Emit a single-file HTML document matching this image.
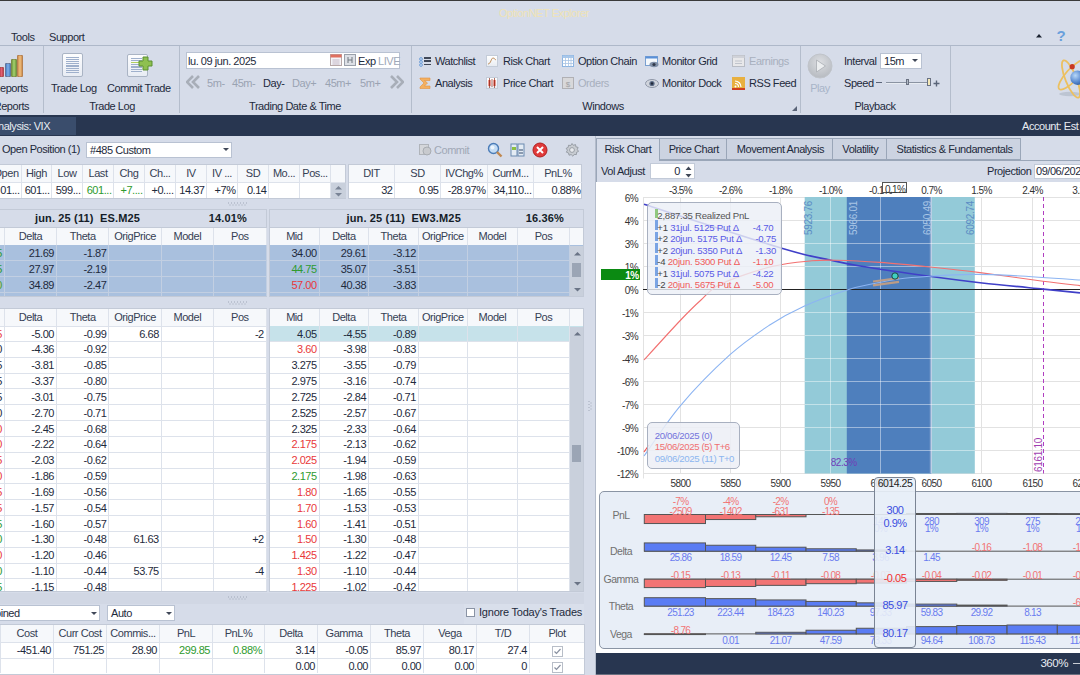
<!DOCTYPE html><html><head><meta charset="utf-8"><style>
*{margin:0;padding:0;box-sizing:border-box}
html,body{width:1080px;height:675px;overflow:hidden;background:#d6dce9}
body{position:relative;font-family:"Liberation Sans",sans-serif;}
body>div{position:absolute}
.t{white-space:nowrap;font-size:11px;letter-spacing:-0.45px;line-height:13px}
</style></head><body><div style="left:0px;top:0px;width:1080px;height:675px;background:#d6dce9"></div>
<div style="left:0px;top:0px;width:1080px;height:1px;background:#3a3a3a"></div>
<div style="left:0px;top:45px;width:1080px;height:1px;background:#aeb8c9"></div>
<div class="t" style="left:394.0px;top:6.70px;width:300px;text-align:center;font-size:11px;color:#efe3b5;letter-spacing:-0.45px">OptionNET Explorer</div>
<div class="t" style="left:11px;top:30.70px;font-size:11px;color:#1e2a3c">Tools</div>
<div class="t" style="left:49px;top:30.70px;font-size:11px;color:#1e2a3c">Support</div>
<svg style="position:absolute;left:1036px;top:34px;" width="6" height="4" viewBox="0 0 6 4"><path d="M0 3.5 L3 0 L6 3.5Z" fill="#1a2230"/></svg>
<svg style="position:absolute;left:1055px;top:27px;" width="12" height="16" viewBox="0 0 12 16"><text x="6" y="14" text-anchor="middle" font-family="Liberation Sans" font-weight="bold" font-size="15" fill="#6aa0dc">?</text></svg>
<div style="left:43px;top:46px;width:1px;height:67px;background:#b4bdcc"></div>
<div style="left:179px;top:46px;width:1px;height:67px;background:#b4bdcc"></div>
<div style="left:411px;top:46px;width:1px;height:67px;background:#b4bdcc"></div>
<div style="left:800px;top:46px;width:1px;height:67px;background:#b4bdcc"></div>
<div style="left:950px;top:46px;width:1px;height:67px;background:#b4bdcc"></div>
<div style="left:-1px;top:67px;width:5px;height:10px;background:linear-gradient(90deg,#c04050,#e06070,#c04050);border-radius:1px;border:1px solid rgba(120,80,60,.35)"></div>
<div style="left:5px;top:63px;width:6px;height:14px;background:linear-gradient(90deg,#4a80c8,#80b0e8,#4a80c8);border-radius:1px;border:1px solid rgba(120,80,60,.35)"></div>
<div style="left:11px;top:59px;width:6px;height:18px;background:linear-gradient(90deg,#70a040,#a8d070,#70a040);border-radius:1px;border:1px solid rgba(120,80,60,.35)"></div>
<div style="left:17px;top:55px;width:6px;height:22px;background:linear-gradient(90deg,#d09050,#f0c080,#d09050);border-radius:1px;border:1px solid rgba(120,80,60,.35)"></div>
<div class="t" style="left:-7.5px;top:82.19px;font-size:11px;color:#1e2a3c">Reports</div>
<div class="t" style="left:-6.3px;top:100.19px;font-size:11px;color:#1e2a3c">Reports</div>
<div style="left:62px;top:53px;width:21px;height:24px;background:linear-gradient(#fdfdfe,#e8ecf4);border:1px solid #aab4c4;border-radius:2px"></div>
<div style="left:66px;top:57px;width:13px;height:1px;background:#9fb0cc"></div>
<div style="left:66px;top:59px;width:13px;height:1px;background:#9fb0cc"></div>
<div style="left:66px;top:61px;width:13px;height:1px;background:#9fb0cc"></div>
<div style="left:66px;top:63px;width:13px;height:1px;background:#9fb0cc"></div>
<div style="left:66px;top:65px;width:13px;height:2px;background:#9fb0cc"></div>
<div style="left:66px;top:68px;width:13px;height:1px;background:#9fb0cc"></div>
<div style="left:66px;top:70px;width:13px;height:1px;background:#9fb0cc"></div>
<div style="left:66px;top:72px;width:13px;height:1px;background:#9fb0cc"></div>
<div style="left:127px;top:54px;width:21px;height:23px;background:linear-gradient(#fdfdfe,#e8ecf4);border:1px solid #aab4c4;border-radius:2px"></div>
<div style="left:131px;top:58px;width:11px;height:1px;background:#9fb0cc"></div>
<div style="left:131px;top:60px;width:11px;height:1px;background:#9fb0cc"></div>
<div style="left:131px;top:62px;width:11px;height:1px;background:#9fb0cc"></div>
<div style="left:131px;top:64px;width:11px;height:1px;background:#9fb0cc"></div>
<div style="left:131px;top:66px;width:11px;height:2px;background:#9fb0cc"></div>
<div style="left:131px;top:69px;width:11px;height:1px;background:#9fb0cc"></div>
<div style="left:131px;top:71px;width:11px;height:1px;background:#9fb0cc"></div>
<div style="left:131px;top:62px;width:14px;height:1px;background:#b0d060"></div>
<svg style="position:absolute;left:138px;top:56px;" width="15" height="15" viewBox="0 0 15 15"><path d="M5 1h5v4h4v5h-4v4h-5v-4h-4v-5h4z" fill="#8ec050" stroke="#5a9030" stroke-width="1"/></svg>
<div class="t" style="left:51px;top:81.69px;font-size:11px;color:#1e2a3c">Trade Log</div>
<div class="t" style="left:107px;top:81.69px;font-size:11px;color:#1e2a3c">Commit Trade</div>
<div class="t" style="left:-38.0px;top:99.69px;width:300px;text-align:center;font-size:11px;color:#1e2a3c">Trade Log</div>
<div style="left:186px;top:52px;width:214px;height:17px;background:#fff;border:1px solid #b9c2d2"></div>
<div class="t" style="left:188px;top:54.70px;font-size:11px;color:#1e2a3c">lu. 09 jun. 2025</div>
<svg style="position:absolute;left:330px;top:54px;" width="12" height="12" viewBox="0 0 12 12"><rect x="0.5" y="0.5" width="11" height="11" fill="#f4f4f8" stroke="#b8a8a8"/><rect x="0.5" y="0.5" width="11" height="3" fill="#e07060"/><path d="M2 6h8M2 8h8M2 10h8M4 5v6M6 5v6M8 5v6" stroke="#c8b8c8" stroke-width=".6"/></svg>
<svg style="position:absolute;left:344px;top:54px;" width="12" height="12" viewBox="0 0 12 12"><rect x="0.5" y="0.5" width="11" height="11" fill="#dde0e6" stroke="#9aa0aa"/><path d="M4 3v6M8 3v6M4 6h4" stroke="#707880" stroke-width="1"/></svg>
<div class="t" style="left:358px;top:54.70px;font-size:11px;color:#1e2a3c">Exp</div>
<div class="t" style="left:378px;top:54.70px;font-size:11px;color:#a0a8b8">LIVE</div>
<svg style="position:absolute;left:186px;top:75px;" width="14" height="14" viewBox="0 0 14 14"><path d="M7 1 L1 7 L7 13 M13 1 L7 7 L13 13" stroke="#a8aeb8" stroke-width="2.6" fill="none"/></svg>
<div class="t" style="left:207px;top:76.69px;font-size:11px;color:#9aa3b2">5m-</div>
<div class="t" style="left:232px;top:76.69px;font-size:11px;color:#9aa3b2">45m-</div>
<div class="t" style="left:263px;top:76.69px;font-size:11px;color:#1e2a3c">Day-</div>
<div class="t" style="left:292px;top:76.69px;font-size:11px;color:#9aa3b2">Day+</div>
<div class="t" style="left:325px;top:76.69px;font-size:11px;color:#9aa3b2">45m+</div>
<div class="t" style="left:360px;top:76.69px;font-size:11px;color:#9aa3b2">5m+</div>
<svg style="position:absolute;left:390px;top:75px;" width="14" height="14" viewBox="0 0 14 14"><path d="M1 1 L7 7 L1 13 M7 1 L13 7 L7 13" stroke="#a8aeb8" stroke-width="2.6" fill="none"/></svg>
<div class="t" style="left:145.0px;top:99.69px;width:300px;text-align:center;font-size:11px;color:#1e2a3c">Trading Date &amp; Time</div>
<svg style="position:absolute;left:419px;top:56.5px;" width="4" height="4" viewBox="0 0 4 4"><circle cx="2" cy="2" r="1.4" fill="#cfe0f4" stroke="#5c90d0" stroke-width=".8"/></svg>
<div style="left:424px;top:57px;width:7px;height:2px;background:#404858"></div>
<svg style="position:absolute;left:419px;top:59.8px;" width="4" height="4" viewBox="0 0 4 4"><circle cx="2" cy="2" r="1.4" fill="#cfe0f4" stroke="#5c90d0" stroke-width=".8"/></svg>
<div style="left:424px;top:60px;width:7px;height:2px;background:#404858"></div>
<svg style="position:absolute;left:419px;top:63.1px;" width="4" height="4" viewBox="0 0 4 4"><circle cx="2" cy="2" r="1.4" fill="#cfe0f4" stroke="#5c90d0" stroke-width=".8"/></svg>
<div style="left:424px;top:64px;width:7px;height:1px;background:#404858"></div>
<div class="t" style="left:435px;top:55.20px;font-size:11px;color:#1e2a3c">Watchlist</div>
<div style="left:486px;top:55px;width:12px;height:12px;background:linear-gradient(#fff,#e8ecf2);border:1px solid #c4ccd8"></div>
<svg style="position:absolute;left:487px;top:56px;" width="10" height="10" viewBox="0 0 10 10"><path d="M1 8 C4 8 4 2 6 2 C8 2 8 4 9 4" stroke="#c09060" stroke-width="1" fill="none"/></svg>
<div class="t" style="left:503px;top:55.20px;font-size:11px;color:#1e2a3c">Risk Chart</div>
<svg style="position:absolute;left:562px;top:55px;" width="12" height="12" viewBox="0 0 12 12"><rect x=".5" y=".5" width="11" height="11" fill="#fff" stroke="#8cb4e0"/><rect x=".5" y=".5" width="11" height="2.5" fill="#a8c8ec"/><path d="M.5 5.5h11M.5 8.5h11M3.5 .5v11M6.5 .5v11M9 .5v11" stroke="#a8c4e4" stroke-width=".8"/></svg>
<div class="t" style="left:578px;top:55.20px;font-size:11px;color:#1e2a3c">Option Chain</div>
<svg style="position:absolute;left:645px;top:56px;" width="14" height="12" viewBox="0 0 14 12"><rect x=".5" y=".5" width="12" height="9" fill="#f4f8fc" stroke="#7aa0d0"/><rect x=".5" y=".5" width="12" height="2" fill="#5a90d8"/><ellipse cx="9" cy="8.5" rx="4.5" ry="2.8" fill="#8090a8"/><circle cx="9" cy="8.5" r="1.6" fill="#303848"/></svg>
<div class="t" style="left:662px;top:55.20px;font-size:11px;color:#1e2a3c">Monitor Grid</div>
<svg style="position:absolute;left:732px;top:55px;" width="13" height="12" viewBox="0 0 13 12"><rect x=".5" y=".5" width="12" height="11" fill="#e8e8ea" stroke="#b8bcc4"/><rect x=".5" y=".5" width="12" height="2.5" fill="#d0d2d8"/><path d="M3 6h7M3 8.5h7" stroke="#c0c4cc" stroke-width="1"/></svg>
<div class="t" style="left:749px;top:55.20px;font-size:11px;color:#a8b0be">Earnings</div>
<svg style="position:absolute;left:419px;top:77px;" width="12" height="12" viewBox="0 0 12 12"><path d="M1 1h10v2.5H5.5L8.5 6 5.5 9H11v2.5H1V10l4-4-4-4z" fill="#f4b060" stroke="#e09040" stroke-width=".6"/></svg>
<div class="t" style="left:435px;top:77.29px;font-size:11px;color:#1e2a3c">Analysis</div>
<div style="left:486px;top:77px;width:12px;height:12px;background:linear-gradient(#fff,#e8ecf2);border:1px solid #c4ccd8"></div>
<svg style="position:absolute;left:487px;top:78px;" width="10" height="10" viewBox="0 0 10 10"><rect x="1.5" y="2" width="2" height="6" fill="#e04030"/><rect x="6.5" y="2" width="2" height="6" fill="#e04030"/><path d="M2.5 0v10M7.5 0v10M5 1v8" stroke="#903020" stroke-width=".7"/></svg>
<div class="t" style="left:503px;top:77.29px;font-size:11px;color:#1e2a3c">Price Chart</div>
<svg style="position:absolute;left:562px;top:77px;" width="12" height="12" viewBox="0 0 12 12"><rect x=".5" y=".5" width="11" height="11" fill="#d8d8da" stroke="#b0b0b4"/><text x="6" y="9.5" text-anchor="middle" font-size="8" fill="#a0a0a4" font-family="Liberation Sans">$</text></svg>
<div class="t" style="left:578px;top:77.29px;font-size:11px;color:#a8b0be">Orders</div>
<svg style="position:absolute;left:645px;top:79px;" width="14" height="9" viewBox="0 0 14 9"><ellipse cx="7" cy="4.5" rx="6.5" ry="4" fill="#d0d4dc" stroke="#9098a8"/><circle cx="7" cy="4.5" r="2.6" fill="#5a6a84"/><circle cx="7" cy="4.5" r="1.2" fill="#202838"/></svg>
<div class="t" style="left:662px;top:77.29px;font-size:11px;color:#1e2a3c">Monitor Dock</div>
<svg style="position:absolute;left:732px;top:77px;" width="13" height="13" viewBox="0 0 13 13"><rect x="0" y="0" width="13" height="13" fill="#e8b040"/><rect x="0" y="11" width="13" height="2" fill="#d04020"/><path d="M3 4a6 6 0 0 1 6 6M3 6.5a3.5 3.5 0 0 1 3.5 3.5" stroke="#fff" stroke-width="1.2" fill="none"/><circle cx="3.5" cy="9.5" r="1" fill="#fff"/></svg>
<div class="t" style="left:749px;top:77.29px;font-size:11px;color:#1e2a3c">RSS Feed</div>
<svg style="position:absolute;left:792px;top:106px;" width="5" height="5" viewBox="0 0 5 5"><path d="M5 0V5H0Z" fill="#5a6478"/></svg>
<div class="t" style="left:453.0px;top:99.69px;width:300px;text-align:center;font-size:11px;color:#1e2a3c">Windows</div>
<svg style="position:absolute;left:807px;top:53px;" width="26" height="26" viewBox="0 0 26 26"><defs><radialGradient id="pg" cx=".5" cy=".35" r=".7"><stop offset="0" stop-color="#dcdee2"/><stop offset="1" stop-color="#b4b8be"/></radialGradient></defs><circle cx="13" cy="13" r="12" fill="url(#pg)" stroke="#c0c4ca"/><path d="M9.5 7 L18.5 13 L9.5 19Z" fill="#eceef0" stroke="#a8acb2" stroke-width=".8"/></svg>
<div class="t" style="left:670.0px;top:81.69px;width:300px;text-align:center;font-size:11px;color:#a8b4c8">Play</div>
<div class="t" style="left:844px;top:55.20px;font-size:11px;color:#1e2a3c">Interval</div>
<div style="left:880px;top:53px;width:42px;height:16px;background:#fff;border:1px solid #b9c2d2"></div>
<div class="t" style="left:884px;top:55.20px;font-size:11px;color:#1e2a3c">15m</div>
<svg style="position:absolute;left:912px;top:59px;" width="6" height="4" viewBox="0 0 6 4"><path d="M0 0H6L3 3Z" fill="#404858"/></svg>
<div class="t" style="left:844px;top:76.50px;font-size:11px;color:#1e2a3c">Speed</div>
<div style="left:876px;top:82px;width:6px;height:1px;background:#5a6478"></div>
<div style="left:886px;top:82px;width:42px;height:2px;background:#8a93a2;border-bottom:1px solid #e8ecf2"></div>
<div style="left:906px;top:79px;width:3px;height:6px;background:#b0b8c4;border:1px solid #6a7282"></div>
<div style="left:927px;top:78px;width:4px;height:8px;background:#f4e8b8;border:1px solid #6a7282"></div>
<svg style="position:absolute;left:933px;top:80px;" width="7" height="7" viewBox="0 0 7 7"><path d="M3.5 0.5v6M0.5 3.5h6" stroke="#5a6478" stroke-width="1.4"/></svg>
<div class="t" style="left:725.0px;top:99.69px;width:300px;text-align:center;font-size:11px;color:#1e2a3c">Playback</div>
<svg style="position:absolute;left:1050px;top:50px;" width="30" height="55" viewBox="0 0 30 55"><defs><radialGradient id="ag" cx=".35" cy=".35" r=".75"><stop offset="0" stop-color="#b8d8f8"/><stop offset=".6" stop-color="#5a8ad0"/><stop offset="1" stop-color="#2a5aa0"/></radialGradient></defs><ellipse cx="20" cy="44" rx="11" ry="2.2" fill="#aab2c0" opacity=".55"/><ellipse cx="21" cy="29" rx="5.5" ry="20" transform="rotate(-22 21 29)" fill="none" stroke="#ecc060" stroke-width="1.8"/><ellipse cx="22" cy="25" rx="19" ry="6" transform="rotate(-48 22 25)" fill="none" stroke="#ecc060" stroke-width="1.8"/><circle cx="27.5" cy="27.7" r="7.2" fill="url(#ag)"/><circle cx="22.2" cy="16.7" r="2.6" fill="#c83820"/></svg>
<div style="left:0px;top:115px;width:1080px;height:21px;background:#283650"></div>
<div style="left:0px;top:117px;width:76px;height:18px;background:#3a4d6c"></div>
<div class="t" style="left:-2px;top:119.69px;font-size:11px;color:#e8ecf2;">nalysis: VIX</div>
<div class="t" style="left:1022px;top:119.69px;font-size:11px;color:#e8ecf2;">Account: Est</div>
<div class="t" style="left:2px;top:142.69px;font-size:11px;color:#1e2a3c">Open Position (1)</div>
<div style="left:86px;top:142px;width:146px;height:16px;background:#fff;border:1px solid #b9c2d2"></div>
<div class="t" style="left:90px;top:143.69px;font-size:11px;color:#1e2a3c">#485 Custom</div>
<svg style="position:absolute;left:223px;top:148px;" width="6" height="4" viewBox="0 0 6 4"><path d="M0 0H6L3 3Z" fill="#404858"/></svg>
<svg style="position:absolute;left:419px;top:143px;" width="13" height="13" viewBox="0 0 13 13"><rect x=".5" y="1.5" width="9" height="10" fill="#d4d6da" stroke="#b0b4ba"/><circle cx="8" cy="8" r="4" fill="#c8cace" stroke="#a8acb2"/></svg>
<div class="t" style="left:434px;top:143.69px;font-size:11px;color:#a0a8b6">Commit</div>
<svg style="position:absolute;left:487px;top:142px;" width="16" height="16" viewBox="0 0 16 16"><circle cx="6.5" cy="6.5" r="5" fill="#c4dcf4" stroke="#4a7cb8" stroke-width="1.4"/><circle cx="5.5" cy="5.5" r="2" fill="#fff" opacity=".7"/><path d="M10 10 L14.5 14.5" stroke="#c08850" stroke-width="2.4"/></svg>
<svg style="position:absolute;left:510px;top:143px;" width="15" height="14" viewBox="0 0 15 14"><rect x="1" y="1" width="6" height="12" fill="#e4ecf4" stroke="#6a8ab0"/><rect x="8" y="1" width="6" height="12" fill="#e4ecf4" stroke="#6a8ab0"/><rect x="2" y="4" width="4" height="3" fill="#8cc040"/><rect x="9" y="6" width="4" height="2" fill="#8a9ab0"/><rect x="9" y="9" width="4" height="2" fill="#8a9ab0"/></svg>
<svg style="position:absolute;left:532px;top:142px;" width="16" height="16" viewBox="0 0 16 16"><circle cx="8" cy="8" r="7" fill="#e03a3a" stroke="#b02020"/><path d="M5 5 L11 11 M11 5 L5 11" stroke="#fff" stroke-width="2"/></svg>
<svg style="position:absolute;left:565px;top:143px;" width="14" height="14" viewBox="0 0 14 14"><path d="M7 0.5 L8.3 2.3 L10.5 1.6 L10.9 3.8 L13.1 4.4 L12.3 6.5 L13.5 8.4 L11.5 9.4 L11.4 11.6 L9.2 11.4 L7.8 13.2 L6.2 11.6 L4 12.2 L3.6 10 L1.4 9.2 L2.4 7.2 L1.2 5.3 L3.2 4.4 L3.5 2.2 L5.7 2.6 Z" fill="#c8ccd2" stroke="#8a9098" stroke-width=".8"/><circle cx="7" cy="7" r="2.4" fill="#e8eaee" stroke="#8a9098" stroke-width=".8"/></svg>
<div style="left:-1px;top:164px;width:347px;height:35px;background:#fff;border:1px solid #c3cad7"></div>
<div style="left:0px;top:165px;width:345px;height:17px;background:#f6f8fb"></div>
<div style="left:0px;top:182px;width:345px;height:1px;background:#dde2eb"></div>
<div style="left:21px;top:165px;width:1px;height:33px;background:#dde2eb"></div>
<div class="t" style="left:-23.95px;top:167.19px;width:60px;text-align:center;font-size:11px;color:#354054">Open</div>
<div class="t" style="left:-40.5px;top:183.69px;width:60px;text-align:right;font-size:11px;color:#1e2a3c">01...</div>
<div style="left:51px;top:165px;width:1px;height:33px;background:#dde2eb"></div>
<div class="t" style="left:6.5px;top:167.19px;width:60px;text-align:center;font-size:11px;color:#354054">High</div>
<div class="t" style="left:-10.5px;top:183.69px;width:60px;text-align:right;font-size:11px;color:#1e2a3c">601...</div>
<div style="left:82px;top:165px;width:1px;height:33px;background:#dde2eb"></div>
<div class="t" style="left:37.0px;top:167.19px;width:60px;text-align:center;font-size:11px;color:#354054">Low</div>
<div class="t" style="left:20.5px;top:183.69px;width:60px;text-align:right;font-size:11px;color:#1e2a3c">599...</div>
<div style="left:113px;top:165px;width:1px;height:33px;background:#dde2eb"></div>
<div class="t" style="left:68.0px;top:167.19px;width:60px;text-align:center;font-size:11px;color:#354054">Last</div>
<div class="t" style="left:51.5px;top:183.69px;width:60px;text-align:right;font-size:11px;color:#2e9a2e">601...</div>
<div style="left:144px;top:165px;width:1px;height:33px;background:#dde2eb"></div>
<div class="t" style="left:99.0px;top:167.19px;width:60px;text-align:center;font-size:11px;color:#354054">Chg</div>
<div class="t" style="left:82.5px;top:183.69px;width:60px;text-align:right;font-size:11px;color:#2e9a2e">+7....</div>
<div style="left:175px;top:165px;width:1px;height:33px;background:#dde2eb"></div>
<div class="t" style="left:130.0px;top:167.19px;width:60px;text-align:center;font-size:11px;color:#354054">Ch...</div>
<div class="t" style="left:113.5px;top:183.69px;width:60px;text-align:right;font-size:11px;color:#1e2a3c">+0....</div>
<div style="left:206px;top:165px;width:1px;height:33px;background:#dde2eb"></div>
<div class="t" style="left:161.0px;top:167.19px;width:60px;text-align:center;font-size:11px;color:#354054">IV</div>
<div class="t" style="left:144.5px;top:183.69px;width:60px;text-align:right;font-size:11px;color:#1e2a3c">14.37</div>
<div style="left:237px;top:165px;width:1px;height:33px;background:#dde2eb"></div>
<div class="t" style="left:192.0px;top:167.19px;width:60px;text-align:center;font-size:11px;color:#354054">IV ...</div>
<div class="t" style="left:175.5px;top:183.69px;width:60px;text-align:right;font-size:11px;color:#1e2a3c">+7%</div>
<div style="left:268px;top:165px;width:1px;height:33px;background:#dde2eb"></div>
<div class="t" style="left:223.0px;top:167.19px;width:60px;text-align:center;font-size:11px;color:#354054">SD</div>
<div class="t" style="left:206.5px;top:183.69px;width:60px;text-align:right;font-size:11px;color:#1e2a3c">0.14</div>
<div style="left:299px;top:165px;width:1px;height:33px;background:#dde2eb"></div>
<div class="t" style="left:254.0px;top:167.19px;width:60px;text-align:center;font-size:11px;color:#354054">Mo...</div>
<div style="left:330px;top:165px;width:1px;height:33px;background:#dde2eb"></div>
<div class="t" style="left:285.0px;top:167.19px;width:60px;text-align:center;font-size:11px;color:#354054">Pos...</div>
<div style="left:331px;top:183px;width:15px;height:15px;background:#c9d0dc"></div>
<svg style="position:absolute;left:335px;top:186px;" width="7" height="4" viewBox="0 0 7 4"><path d="M0 3.5 L3.5 0 L7 3.5Z" fill="#7a8496"/></svg>
<svg style="position:absolute;left:335px;top:193px;" width="7" height="4" viewBox="0 0 7 4"><path d="M0 0 L3.5 3.5 L7 0Z" fill="#7a8496"/></svg>
<div style="left:348px;top:164px;width:234px;height:35px;background:#fff;border:1px solid #c3cad7"></div>
<div style="left:349px;top:165px;width:232px;height:17px;background:#f6f8fb"></div>
<div style="left:349px;top:182px;width:233px;height:1px;background:#dde2eb"></div>
<div style="left:394px;top:165px;width:1px;height:33px;background:#dde2eb"></div>
<div class="t" style="left:341.5px;top:167.19px;width:60px;text-align:center;font-size:11px;color:#354054">DIT</div>
<div class="t" style="left:332.5px;top:183.69px;width:60px;text-align:right;font-size:11px;color:#1e2a3c">32</div>
<div style="left:440px;top:165px;width:1px;height:33px;background:#dde2eb"></div>
<div class="t" style="left:387.5px;top:167.19px;width:60px;text-align:center;font-size:11px;color:#354054">SD</div>
<div class="t" style="left:378.5px;top:183.69px;width:60px;text-align:right;font-size:11px;color:#1e2a3c">0.95</div>
<div style="left:487px;top:165px;width:1px;height:33px;background:#dde2eb"></div>
<div class="t" style="left:434.0px;top:167.19px;width:60px;text-align:center;font-size:11px;color:#354054">IVChg%</div>
<div class="t" style="left:425.5px;top:183.69px;width:60px;text-align:right;font-size:11px;color:#1e2a3c">-28.97%</div>
<div style="left:533px;top:165px;width:1px;height:33px;background:#dde2eb"></div>
<div class="t" style="left:480.5px;top:167.19px;width:60px;text-align:center;font-size:11px;color:#354054">CurrM...</div>
<div class="t" style="left:471.5px;top:183.69px;width:60px;text-align:right;font-size:11px;color:#1e2a3c">34,110...</div>
<div class="t" style="left:528.0px;top:167.19px;width:60px;text-align:center;font-size:11px;color:#354054">PnL%</div>
<div class="t" style="left:520.5px;top:183.69px;width:60px;text-align:right;font-size:11px;color:#1e2a3c">0.88%</div>
<svg style="position:absolute;left:227px;top:202px;" width="22" height="4" viewBox="0 0 22 4"><path d="M1 1h1M4 1h1M7 1h1M10 1h1M13 1h1M16 1h1M19 1h1M2.5 3h1M5.5 3h1M8.5 3h1M11.5 3h1M14.5 3h1M17.5 3h1" stroke="#a0a8b8" stroke-width="1"/></svg>
<svg style="position:absolute;left:227px;top:300.5px;" width="22" height="4" viewBox="0 0 22 4"><path d="M1 1h1M4 1h1M7 1h1M10 1h1M13 1h1M16 1h1M19 1h1M2.5 3h1M5.5 3h1M8.5 3h1M11.5 3h1M14.5 3h1M17.5 3h1" stroke="#a0a8b8" stroke-width="1"/></svg>
<svg style="position:absolute;left:227px;top:595.5px;" width="22" height="4" viewBox="0 0 22 4"><path d="M1 1h1M4 1h1M7 1h1M10 1h1M13 1h1M16 1h1M19 1h1M2.5 3h1M5.5 3h1M8.5 3h1M11.5 3h1M14.5 3h1M17.5 3h1" stroke="#a0a8b8" stroke-width="1"/></svg>
<div style="left:-1px;top:209px;width:268px;height:88px;background:#d6dce9;border:1px solid #c3cad7;border-bottom:none"></div>
<div class="t" style="left:35px;top:212.39px;font-size:11px;color:#141c28;font-weight:bold;letter-spacing:0.15px">jun. 25 (11)&nbsp; ES.M25</div>
<div class="t" style="left:167px;top:212.39px;width:80px;text-align:right;font-size:11px;color:#141c28;font-weight:bold;letter-spacing:0.15px">14.01%</div>
<div style="left:-1px;top:227px;width:268px;height:70px;background:#fff;border:1px solid #c3cad7;border-bottom:1px solid #c3cad7"></div>
<div style="left:0px;top:228px;width:266px;height:17px;background:#f6f8fb"></div>
<div style="left:0px;top:245px;width:266px;height:1px;background:#dde2eb"></div>
<div style="left:0px;top:245px;width:266px;height:16px;background:#a9c0de"></div>
<div style="left:0px;top:260px;width:266px;height:1px;background:#c2cfe2"></div>
<div style="left:0px;top:261px;width:266px;height:16px;background:#a9c0de"></div>
<div style="left:0px;top:276px;width:266px;height:1px;background:#c2cfe2"></div>
<div style="left:0px;top:277px;width:266px;height:16px;background:#a9c0de"></div>
<div style="left:0px;top:292px;width:266px;height:1px;background:#c2cfe2"></div>
<div style="left:0px;top:293px;width:266px;height:3px;background:#a9c0de"></div>
<div style="left:4px;top:228px;width:1px;height:17px;background:#dde2eb"></div>
<div style="left:4px;top:245px;width:1px;height:51px;background:#c2cfe2"></div>
<div style="left:56px;top:228px;width:1px;height:17px;background:#dde2eb"></div>
<div style="left:56px;top:245px;width:1px;height:51px;background:#c2cfe2"></div>
<div style="left:108px;top:228px;width:1px;height:17px;background:#dde2eb"></div>
<div style="left:108px;top:245px;width:1px;height:51px;background:#c2cfe2"></div>
<div style="left:161px;top:228px;width:1px;height:17px;background:#dde2eb"></div>
<div style="left:161px;top:245px;width:1px;height:51px;background:#c2cfe2"></div>
<div style="left:213px;top:228px;width:1px;height:17px;background:#dde2eb"></div>
<div style="left:213px;top:245px;width:1px;height:51px;background:#c2cfe2"></div>
<div style="left:266px;top:228px;width:1px;height:17px;background:#dde2eb"></div>
<div style="left:266px;top:245px;width:1px;height:51px;background:#c2cfe2"></div>
<div class="t" style="left:0.4499999999999993px;top:229.89px;width:60px;text-align:center;font-size:11px;color:#354054">Delta</div>
<div class="t" style="left:52.7px;top:229.89px;width:60px;text-align:center;font-size:11px;color:#354054">Theta</div>
<div class="t" style="left:105.10000000000002px;top:229.89px;width:60px;text-align:center;font-size:11px;color:#354054">OrigPrice</div>
<div class="t" style="left:157.35000000000002px;top:229.89px;width:60px;text-align:center;font-size:11px;color:#354054">Model</div>
<div class="t" style="left:209.85000000000002px;top:229.89px;width:60px;text-align:center;font-size:11px;color:#354054">Pos</div>
<div class="t" style="left:-68.1px;top:246.50px;width:70px;text-align:right;font-size:11px;color:#2e9a2e">5</div>
<div class="t" style="left:-16.0px;top:246.50px;width:70px;text-align:right;font-size:11px;color:#1e2a3c">21.69</div>
<div class="t" style="left:36.400000000000006px;top:246.50px;width:70px;text-align:right;font-size:11px;color:#1e2a3c">-1.87</div>
<div class="t" style="left:-68.1px;top:262.50px;width:70px;text-align:right;font-size:11px;color:#2e9a2e">5</div>
<div class="t" style="left:-16.0px;top:262.50px;width:70px;text-align:right;font-size:11px;color:#1e2a3c">27.97</div>
<div class="t" style="left:36.400000000000006px;top:262.50px;width:70px;text-align:right;font-size:11px;color:#1e2a3c">-2.19</div>
<div class="t" style="left:-68.1px;top:278.50px;width:70px;text-align:right;font-size:11px;color:#50a020">0</div>
<div class="t" style="left:-16.0px;top:278.50px;width:70px;text-align:right;font-size:11px;color:#1e2a3c">34.89</div>
<div class="t" style="left:36.400000000000006px;top:278.50px;width:70px;text-align:right;font-size:11px;color:#1e2a3c">-2.47</div>
<div style="left:269px;top:209px;width:315px;height:88px;background:#d6dce9;border:1px solid #c3cad7;border-bottom:none"></div>
<div class="t" style="left:346.5px;top:212.39px;font-size:11px;color:#141c28;font-weight:bold;letter-spacing:0.15px">jun. 25 (11)&nbsp; EW3.M25</div>
<div class="t" style="left:484px;top:212.39px;width:80px;text-align:right;font-size:11px;color:#141c28;font-weight:bold;letter-spacing:0.15px">16.36%</div>
<div style="left:269px;top:227px;width:315px;height:70px;background:#fff;border:1px solid #c3cad7;border-bottom:1px solid #c3cad7"></div>
<div style="left:270px;top:228px;width:313px;height:17px;background:#f6f8fb"></div>
<div style="left:270px;top:245px;width:313px;height:1px;background:#dde2eb"></div>
<div style="left:270px;top:245px;width:313px;height:16px;background:#a9c0de"></div>
<div style="left:270px;top:260px;width:313px;height:1px;background:#c2cfe2"></div>
<div style="left:270px;top:261px;width:313px;height:16px;background:#a9c0de"></div>
<div style="left:270px;top:276px;width:313px;height:1px;background:#c2cfe2"></div>
<div style="left:270px;top:277px;width:313px;height:16px;background:#a9c0de"></div>
<div style="left:270px;top:292px;width:313px;height:1px;background:#c2cfe2"></div>
<div style="left:270px;top:293px;width:313px;height:3px;background:#a9c0de"></div>
<div style="left:319px;top:228px;width:1px;height:17px;background:#dde2eb"></div>
<div style="left:319px;top:245px;width:1px;height:51px;background:#c2cfe2"></div>
<div style="left:368px;top:228px;width:1px;height:17px;background:#dde2eb"></div>
<div style="left:368px;top:245px;width:1px;height:51px;background:#c2cfe2"></div>
<div style="left:418px;top:228px;width:1px;height:17px;background:#dde2eb"></div>
<div style="left:418px;top:245px;width:1px;height:51px;background:#c2cfe2"></div>
<div style="left:467px;top:228px;width:1px;height:17px;background:#dde2eb"></div>
<div style="left:467px;top:245px;width:1px;height:51px;background:#c2cfe2"></div>
<div style="left:517px;top:228px;width:1px;height:17px;background:#dde2eb"></div>
<div style="left:517px;top:245px;width:1px;height:51px;background:#c2cfe2"></div>
<div style="left:569px;top:228px;width:1px;height:17px;background:#dde2eb"></div>
<div style="left:569px;top:245px;width:1px;height:51px;background:#c2cfe2"></div>
<div class="t" style="left:264.35px;top:229.89px;width:60px;text-align:center;font-size:11px;color:#354054">Mid</div>
<div class="t" style="left:313.9px;top:229.89px;width:60px;text-align:center;font-size:11px;color:#354054">Delta</div>
<div class="t" style="left:363.5px;top:229.89px;width:60px;text-align:center;font-size:11px;color:#354054">Theta</div>
<div class="t" style="left:412.79999999999995px;top:229.89px;width:60px;text-align:center;font-size:11px;color:#354054">OrigPrice</div>
<div class="t" style="left:462.4px;top:229.89px;width:60px;text-align:center;font-size:11px;color:#354054">Model</div>
<div class="t" style="left:513.55px;top:229.89px;width:60px;text-align:center;font-size:11px;color:#354054">Pos</div>
<div class="t" style="left:246.7px;top:246.50px;width:70px;text-align:right;font-size:11px;color:#1e2a3c">34.00</div>
<div class="t" style="left:296.1px;top:246.50px;width:70px;text-align:right;font-size:11px;color:#1e2a3c">29.61</div>
<div class="t" style="left:345.9px;top:246.50px;width:70px;text-align:right;font-size:11px;color:#1e2a3c">-3.12</div>
<div class="t" style="left:246.7px;top:262.50px;width:70px;text-align:right;font-size:11px;color:#2e9a2e">44.75</div>
<div class="t" style="left:296.1px;top:262.50px;width:70px;text-align:right;font-size:11px;color:#1e2a3c">35.07</div>
<div class="t" style="left:345.9px;top:262.50px;width:70px;text-align:right;font-size:11px;color:#1e2a3c">-3.51</div>
<div class="t" style="left:246.7px;top:278.50px;width:70px;text-align:right;font-size:11px;color:#e8383a">57.00</div>
<div class="t" style="left:296.1px;top:278.50px;width:70px;text-align:right;font-size:11px;color:#1e2a3c">40.38</div>
<div class="t" style="left:345.9px;top:278.50px;width:70px;text-align:right;font-size:11px;color:#1e2a3c">-3.83</div>
<div style="left:570px;top:246px;width:13px;height:50px;background:#c9d0dc"></div>
<svg style="position:absolute;left:573.5px;top:252px;" width="7" height="4" viewBox="0 0 7 4"><path d="M0 3.5 L3.5 0 L7 3.5Z" fill="#6a7486"/></svg>
<div style="left:572px;top:263px;width:9px;height:14px;background:#9ba5b5"></div>
<svg style="position:absolute;left:573.5px;top:288px;" width="7" height="4" viewBox="0 0 7 4"><path d="M0 0 L3.5 3.5 L7 0Z" fill="#6a7486"/></svg>
<div style="left:-1px;top:308px;width:268px;height:284px;background:#fff;border:1px solid #c3cad7;border-bottom:1px solid #c3cad7"></div>
<div style="left:0px;top:309px;width:266px;height:17px;background:#f6f8fb"></div>
<div style="left:0px;top:326px;width:266px;height:1px;background:#dde2eb"></div>
<div style="left:0px;top:341px;width:266px;height:1px;background:#dde2eb"></div>
<div style="left:0px;top:357px;width:266px;height:1px;background:#dde2eb"></div>
<div style="left:0px;top:373px;width:266px;height:1px;background:#dde2eb"></div>
<div style="left:0px;top:388px;width:266px;height:1px;background:#dde2eb"></div>
<div style="left:0px;top:404px;width:266px;height:1px;background:#dde2eb"></div>
<div style="left:0px;top:420px;width:266px;height:1px;background:#dde2eb"></div>
<div style="left:0px;top:436px;width:266px;height:1px;background:#dde2eb"></div>
<div style="left:0px;top:452px;width:266px;height:1px;background:#dde2eb"></div>
<div style="left:0px;top:468px;width:266px;height:1px;background:#dde2eb"></div>
<div style="left:0px;top:483px;width:266px;height:1px;background:#dde2eb"></div>
<div style="left:0px;top:499px;width:266px;height:1px;background:#dde2eb"></div>
<div style="left:0px;top:515px;width:266px;height:1px;background:#dde2eb"></div>
<div style="left:0px;top:531px;width:266px;height:1px;background:#dde2eb"></div>
<div style="left:0px;top:547px;width:266px;height:1px;background:#dde2eb"></div>
<div style="left:0px;top:563px;width:266px;height:1px;background:#dde2eb"></div>
<div style="left:0px;top:578px;width:266px;height:1px;background:#dde2eb"></div>
<div style="left:4px;top:309px;width:1px;height:282px;background:#dde2eb"></div>
<div style="left:56px;top:309px;width:1px;height:282px;background:#dde2eb"></div>
<div style="left:108px;top:309px;width:1px;height:282px;background:#dde2eb"></div>
<div style="left:161px;top:309px;width:1px;height:282px;background:#dde2eb"></div>
<div style="left:213px;top:309px;width:1px;height:282px;background:#dde2eb"></div>
<div style="left:266px;top:309px;width:1px;height:282px;background:#dde2eb"></div>
<div class="t" style="left:0.4499999999999993px;top:311.19px;width:60px;text-align:center;font-size:11px;color:#354054">Delta</div>
<div class="t" style="left:52.7px;top:311.19px;width:60px;text-align:center;font-size:11px;color:#354054">Theta</div>
<div class="t" style="left:105.10000000000002px;top:311.19px;width:60px;text-align:center;font-size:11px;color:#354054">OrigPrice</div>
<div class="t" style="left:157.35000000000002px;top:311.19px;width:60px;text-align:center;font-size:11px;color:#354054">Model</div>
<div class="t" style="left:209.85000000000002px;top:311.19px;width:60px;text-align:center;font-size:11px;color:#354054">Pos</div>
<div class="t" style="left:-68.1px;top:327.50px;width:70px;text-align:right;font-size:11px;color:#e8383a">5</div>
<div class="t" style="left:-16.0px;top:327.50px;width:70px;text-align:right;font-size:11px;color:#1e2a3c">-5.00</div>
<div class="t" style="left:36.400000000000006px;top:327.50px;width:70px;text-align:right;font-size:11px;color:#1e2a3c">-0.99</div>
<div class="t" style="left:88.80000000000001px;top:327.50px;width:70px;text-align:right;font-size:11px;color:#1e2a3c">6.68</div>
<div class="t" style="left:193.8px;top:327.50px;width:70px;text-align:right;font-size:11px;color:#1e2a3c">-2</div>
<div class="t" style="left:-68.1px;top:343.33px;width:70px;text-align:right;font-size:11px;color:#1e2a3c">0</div>
<div class="t" style="left:-16.0px;top:343.33px;width:70px;text-align:right;font-size:11px;color:#1e2a3c">-4.36</div>
<div class="t" style="left:36.400000000000006px;top:343.33px;width:70px;text-align:right;font-size:11px;color:#1e2a3c">-0.92</div>
<div class="t" style="left:-68.1px;top:359.18px;width:70px;text-align:right;font-size:11px;color:#1e2a3c">5</div>
<div class="t" style="left:-16.0px;top:359.18px;width:70px;text-align:right;font-size:11px;color:#1e2a3c">-3.81</div>
<div class="t" style="left:36.400000000000006px;top:359.18px;width:70px;text-align:right;font-size:11px;color:#1e2a3c">-0.85</div>
<div class="t" style="left:-68.1px;top:375.01px;width:70px;text-align:right;font-size:11px;color:#1e2a3c">5</div>
<div class="t" style="left:-16.0px;top:375.01px;width:70px;text-align:right;font-size:11px;color:#1e2a3c">-3.37</div>
<div class="t" style="left:36.400000000000006px;top:375.01px;width:70px;text-align:right;font-size:11px;color:#1e2a3c">-0.80</div>
<div class="t" style="left:-68.1px;top:390.86px;width:70px;text-align:right;font-size:11px;color:#1e2a3c">5</div>
<div class="t" style="left:-16.0px;top:390.86px;width:70px;text-align:right;font-size:11px;color:#1e2a3c">-3.01</div>
<div class="t" style="left:36.400000000000006px;top:390.86px;width:70px;text-align:right;font-size:11px;color:#1e2a3c">-0.75</div>
<div class="t" style="left:-68.1px;top:406.69px;width:70px;text-align:right;font-size:11px;color:#1e2a3c">0</div>
<div class="t" style="left:-16.0px;top:406.69px;width:70px;text-align:right;font-size:11px;color:#1e2a3c">-2.70</div>
<div class="t" style="left:36.400000000000006px;top:406.69px;width:70px;text-align:right;font-size:11px;color:#1e2a3c">-0.71</div>
<div class="t" style="left:-68.1px;top:422.53px;width:70px;text-align:right;font-size:11px;color:#e8383a">0</div>
<div class="t" style="left:-16.0px;top:422.53px;width:70px;text-align:right;font-size:11px;color:#1e2a3c">-2.45</div>
<div class="t" style="left:36.400000000000006px;top:422.53px;width:70px;text-align:right;font-size:11px;color:#1e2a3c">-0.68</div>
<div class="t" style="left:-68.1px;top:438.38px;width:70px;text-align:right;font-size:11px;color:#e8383a">0</div>
<div class="t" style="left:-16.0px;top:438.38px;width:70px;text-align:right;font-size:11px;color:#1e2a3c">-2.22</div>
<div class="t" style="left:36.400000000000006px;top:438.38px;width:70px;text-align:right;font-size:11px;color:#1e2a3c">-0.64</div>
<div class="t" style="left:-68.1px;top:454.22px;width:70px;text-align:right;font-size:11px;color:#e8383a">5</div>
<div class="t" style="left:-16.0px;top:454.22px;width:70px;text-align:right;font-size:11px;color:#1e2a3c">-2.03</div>
<div class="t" style="left:36.400000000000006px;top:454.22px;width:70px;text-align:right;font-size:11px;color:#1e2a3c">-0.62</div>
<div class="t" style="left:-68.1px;top:470.06px;width:70px;text-align:right;font-size:11px;color:#e8383a">0</div>
<div class="t" style="left:-16.0px;top:470.06px;width:70px;text-align:right;font-size:11px;color:#1e2a3c">-1.86</div>
<div class="t" style="left:36.400000000000006px;top:470.06px;width:70px;text-align:right;font-size:11px;color:#1e2a3c">-0.59</div>
<div class="t" style="left:-68.1px;top:485.89px;width:70px;text-align:right;font-size:11px;color:#e8383a">5</div>
<div class="t" style="left:-16.0px;top:485.89px;width:70px;text-align:right;font-size:11px;color:#1e2a3c">-1.69</div>
<div class="t" style="left:36.400000000000006px;top:485.89px;width:70px;text-align:right;font-size:11px;color:#1e2a3c">-0.56</div>
<div class="t" style="left:-68.1px;top:501.73px;width:70px;text-align:right;font-size:11px;color:#e8383a">5</div>
<div class="t" style="left:-16.0px;top:501.73px;width:70px;text-align:right;font-size:11px;color:#1e2a3c">-1.57</div>
<div class="t" style="left:36.400000000000006px;top:501.73px;width:70px;text-align:right;font-size:11px;color:#1e2a3c">-0.54</div>
<div class="t" style="left:-68.1px;top:517.57px;width:70px;text-align:right;font-size:11px;color:#2e9a2e">5</div>
<div class="t" style="left:-16.0px;top:517.57px;width:70px;text-align:right;font-size:11px;color:#1e2a3c">-1.60</div>
<div class="t" style="left:36.400000000000006px;top:517.57px;width:70px;text-align:right;font-size:11px;color:#1e2a3c">-0.57</div>
<div class="t" style="left:-68.1px;top:533.41px;width:70px;text-align:right;font-size:11px;color:#2e9a2e">0</div>
<div class="t" style="left:-16.0px;top:533.41px;width:70px;text-align:right;font-size:11px;color:#1e2a3c">-1.30</div>
<div class="t" style="left:36.400000000000006px;top:533.41px;width:70px;text-align:right;font-size:11px;color:#1e2a3c">-0.48</div>
<div class="t" style="left:88.80000000000001px;top:533.41px;width:70px;text-align:right;font-size:11px;color:#1e2a3c">61.63</div>
<div class="t" style="left:193.8px;top:533.41px;width:70px;text-align:right;font-size:11px;color:#1e2a3c">+2</div>
<div class="t" style="left:-68.1px;top:549.25px;width:70px;text-align:right;font-size:11px;color:#e8383a">0</div>
<div class="t" style="left:-16.0px;top:549.25px;width:70px;text-align:right;font-size:11px;color:#1e2a3c">-1.20</div>
<div class="t" style="left:36.400000000000006px;top:549.25px;width:70px;text-align:right;font-size:11px;color:#1e2a3c">-0.46</div>
<div class="t" style="left:-68.1px;top:565.10px;width:70px;text-align:right;font-size:11px;color:#2e9a2e">0</div>
<div class="t" style="left:-16.0px;top:565.10px;width:70px;text-align:right;font-size:11px;color:#1e2a3c">-1.10</div>
<div class="t" style="left:36.400000000000006px;top:565.10px;width:70px;text-align:right;font-size:11px;color:#1e2a3c">-0.44</div>
<div class="t" style="left:88.80000000000001px;top:565.10px;width:70px;text-align:right;font-size:11px;color:#1e2a3c">53.75</div>
<div class="t" style="left:193.8px;top:565.10px;width:70px;text-align:right;font-size:11px;color:#1e2a3c">-4</div>
<div class="t" style="left:-68.1px;top:580.94px;width:70px;text-align:right;font-size:11px;color:#2e9a2e">5</div>
<div class="t" style="left:-16.0px;top:580.94px;width:70px;text-align:right;font-size:11px;color:#1e2a3c">-1.15</div>
<div class="t" style="left:36.400000000000006px;top:580.94px;width:70px;text-align:right;font-size:11px;color:#1e2a3c">-0.48</div>
<div style="left:269px;top:308px;width:315px;height:284px;background:#fff;border:1px solid #c3cad7;border-bottom:1px solid #c3cad7"></div>
<div style="left:270px;top:309px;width:313px;height:17px;background:#f6f8fb"></div>
<div style="left:270px;top:326px;width:313px;height:1px;background:#dde2eb"></div>
<div style="left:270px;top:326px;width:313px;height:16px;background:#c6e2ea"></div>
<div style="left:270px;top:341px;width:313px;height:1px;background:#dde2eb"></div>
<div style="left:270px;top:357px;width:313px;height:1px;background:#dde2eb"></div>
<div style="left:270px;top:373px;width:313px;height:1px;background:#dde2eb"></div>
<div style="left:270px;top:388px;width:313px;height:1px;background:#dde2eb"></div>
<div style="left:270px;top:404px;width:313px;height:1px;background:#dde2eb"></div>
<div style="left:270px;top:420px;width:313px;height:1px;background:#dde2eb"></div>
<div style="left:270px;top:436px;width:313px;height:1px;background:#dde2eb"></div>
<div style="left:270px;top:452px;width:313px;height:1px;background:#dde2eb"></div>
<div style="left:270px;top:468px;width:313px;height:1px;background:#dde2eb"></div>
<div style="left:270px;top:483px;width:313px;height:1px;background:#dde2eb"></div>
<div style="left:270px;top:499px;width:313px;height:1px;background:#dde2eb"></div>
<div style="left:270px;top:515px;width:313px;height:1px;background:#dde2eb"></div>
<div style="left:270px;top:531px;width:313px;height:1px;background:#dde2eb"></div>
<div style="left:270px;top:547px;width:313px;height:1px;background:#dde2eb"></div>
<div style="left:270px;top:563px;width:313px;height:1px;background:#dde2eb"></div>
<div style="left:270px;top:578px;width:313px;height:1px;background:#dde2eb"></div>
<div style="left:319px;top:309px;width:1px;height:282px;background:#dde2eb"></div>
<div style="left:368px;top:309px;width:1px;height:282px;background:#dde2eb"></div>
<div style="left:418px;top:309px;width:1px;height:282px;background:#dde2eb"></div>
<div style="left:467px;top:309px;width:1px;height:282px;background:#dde2eb"></div>
<div style="left:517px;top:309px;width:1px;height:282px;background:#dde2eb"></div>
<div style="left:569px;top:309px;width:1px;height:282px;background:#dde2eb"></div>
<div class="t" style="left:264.35px;top:311.19px;width:60px;text-align:center;font-size:11px;color:#354054">Mid</div>
<div class="t" style="left:313.9px;top:311.19px;width:60px;text-align:center;font-size:11px;color:#354054">Delta</div>
<div class="t" style="left:363.5px;top:311.19px;width:60px;text-align:center;font-size:11px;color:#354054">Theta</div>
<div class="t" style="left:412.79999999999995px;top:311.19px;width:60px;text-align:center;font-size:11px;color:#354054">OrigPrice</div>
<div class="t" style="left:462.4px;top:311.19px;width:60px;text-align:center;font-size:11px;color:#354054">Model</div>
<div class="t" style="left:513.55px;top:311.19px;width:60px;text-align:center;font-size:11px;color:#354054">Pos</div>
<div class="t" style="left:246.7px;top:327.50px;width:70px;text-align:right;font-size:11px;color:#1e2a3c">4.05</div>
<div class="t" style="left:296.1px;top:327.50px;width:70px;text-align:right;font-size:11px;color:#1e2a3c">-4.55</div>
<div class="t" style="left:345.9px;top:327.50px;width:70px;text-align:right;font-size:11px;color:#1e2a3c">-0.89</div>
<div class="t" style="left:246.7px;top:343.33px;width:70px;text-align:right;font-size:11px;color:#e8383a">3.60</div>
<div class="t" style="left:296.1px;top:343.33px;width:70px;text-align:right;font-size:11px;color:#1e2a3c">-3.98</div>
<div class="t" style="left:345.9px;top:343.33px;width:70px;text-align:right;font-size:11px;color:#1e2a3c">-0.83</div>
<div class="t" style="left:246.7px;top:359.18px;width:70px;text-align:right;font-size:11px;color:#1e2a3c">3.275</div>
<div class="t" style="left:296.1px;top:359.18px;width:70px;text-align:right;font-size:11px;color:#1e2a3c">-3.55</div>
<div class="t" style="left:345.9px;top:359.18px;width:70px;text-align:right;font-size:11px;color:#1e2a3c">-0.79</div>
<div class="t" style="left:246.7px;top:375.01px;width:70px;text-align:right;font-size:11px;color:#1e2a3c">2.975</div>
<div class="t" style="left:296.1px;top:375.01px;width:70px;text-align:right;font-size:11px;color:#1e2a3c">-3.16</div>
<div class="t" style="left:345.9px;top:375.01px;width:70px;text-align:right;font-size:11px;color:#1e2a3c">-0.74</div>
<div class="t" style="left:246.7px;top:390.86px;width:70px;text-align:right;font-size:11px;color:#1e2a3c">2.725</div>
<div class="t" style="left:296.1px;top:390.86px;width:70px;text-align:right;font-size:11px;color:#1e2a3c">-2.84</div>
<div class="t" style="left:345.9px;top:390.86px;width:70px;text-align:right;font-size:11px;color:#1e2a3c">-0.71</div>
<div class="t" style="left:246.7px;top:406.69px;width:70px;text-align:right;font-size:11px;color:#1e2a3c">2.525</div>
<div class="t" style="left:296.1px;top:406.69px;width:70px;text-align:right;font-size:11px;color:#1e2a3c">-2.57</div>
<div class="t" style="left:345.9px;top:406.69px;width:70px;text-align:right;font-size:11px;color:#1e2a3c">-0.67</div>
<div class="t" style="left:246.7px;top:422.53px;width:70px;text-align:right;font-size:11px;color:#1e2a3c">2.325</div>
<div class="t" style="left:296.1px;top:422.53px;width:70px;text-align:right;font-size:11px;color:#1e2a3c">-2.33</div>
<div class="t" style="left:345.9px;top:422.53px;width:70px;text-align:right;font-size:11px;color:#1e2a3c">-0.64</div>
<div class="t" style="left:246.7px;top:438.38px;width:70px;text-align:right;font-size:11px;color:#e8383a">2.175</div>
<div class="t" style="left:296.1px;top:438.38px;width:70px;text-align:right;font-size:11px;color:#1e2a3c">-2.13</div>
<div class="t" style="left:345.9px;top:438.38px;width:70px;text-align:right;font-size:11px;color:#1e2a3c">-0.62</div>
<div class="t" style="left:246.7px;top:454.22px;width:70px;text-align:right;font-size:11px;color:#e8383a">2.025</div>
<div class="t" style="left:296.1px;top:454.22px;width:70px;text-align:right;font-size:11px;color:#1e2a3c">-1.94</div>
<div class="t" style="left:345.9px;top:454.22px;width:70px;text-align:right;font-size:11px;color:#1e2a3c">-0.59</div>
<div class="t" style="left:246.7px;top:470.06px;width:70px;text-align:right;font-size:11px;color:#2e9a2e">2.175</div>
<div class="t" style="left:296.1px;top:470.06px;width:70px;text-align:right;font-size:11px;color:#1e2a3c">-1.98</div>
<div class="t" style="left:345.9px;top:470.06px;width:70px;text-align:right;font-size:11px;color:#1e2a3c">-0.63</div>
<div class="t" style="left:246.7px;top:485.89px;width:70px;text-align:right;font-size:11px;color:#e8383a">1.80</div>
<div class="t" style="left:296.1px;top:485.89px;width:70px;text-align:right;font-size:11px;color:#1e2a3c">-1.65</div>
<div class="t" style="left:345.9px;top:485.89px;width:70px;text-align:right;font-size:11px;color:#1e2a3c">-0.55</div>
<div class="t" style="left:246.7px;top:501.73px;width:70px;text-align:right;font-size:11px;color:#e8383a">1.70</div>
<div class="t" style="left:296.1px;top:501.73px;width:70px;text-align:right;font-size:11px;color:#1e2a3c">-1.53</div>
<div class="t" style="left:345.9px;top:501.73px;width:70px;text-align:right;font-size:11px;color:#1e2a3c">-0.53</div>
<div class="t" style="left:246.7px;top:517.57px;width:70px;text-align:right;font-size:11px;color:#e8383a">1.60</div>
<div class="t" style="left:296.1px;top:517.57px;width:70px;text-align:right;font-size:11px;color:#1e2a3c">-1.41</div>
<div class="t" style="left:345.9px;top:517.57px;width:70px;text-align:right;font-size:11px;color:#1e2a3c">-0.51</div>
<div class="t" style="left:246.7px;top:533.41px;width:70px;text-align:right;font-size:11px;color:#e8383a">1.50</div>
<div class="t" style="left:296.1px;top:533.41px;width:70px;text-align:right;font-size:11px;color:#1e2a3c">-1.30</div>
<div class="t" style="left:345.9px;top:533.41px;width:70px;text-align:right;font-size:11px;color:#1e2a3c">-0.48</div>
<div class="t" style="left:246.7px;top:549.25px;width:70px;text-align:right;font-size:11px;color:#e8383a">1.425</div>
<div class="t" style="left:296.1px;top:549.25px;width:70px;text-align:right;font-size:11px;color:#1e2a3c">-1.22</div>
<div class="t" style="left:345.9px;top:549.25px;width:70px;text-align:right;font-size:11px;color:#1e2a3c">-0.47</div>
<div class="t" style="left:246.7px;top:565.10px;width:70px;text-align:right;font-size:11px;color:#e8383a">1.30</div>
<div class="t" style="left:296.1px;top:565.10px;width:70px;text-align:right;font-size:11px;color:#1e2a3c">-1.10</div>
<div class="t" style="left:345.9px;top:565.10px;width:70px;text-align:right;font-size:11px;color:#1e2a3c">-0.44</div>
<div class="t" style="left:246.7px;top:580.94px;width:70px;text-align:right;font-size:11px;color:#e8383a">1.225</div>
<div class="t" style="left:296.1px;top:580.94px;width:70px;text-align:right;font-size:11px;color:#1e2a3c">-1.02</div>
<div class="t" style="left:345.9px;top:580.94px;width:70px;text-align:right;font-size:11px;color:#1e2a3c">-0.42</div>
<div style="left:570px;top:327px;width:13px;height:264px;background:#c9d0dc"></div>
<svg style="position:absolute;left:573.5px;top:332px;" width="7" height="4" viewBox="0 0 7 4"><path d="M0 3.5 L3.5 0 L7 3.5Z" fill="#6a7486"/></svg>
<div style="left:572px;top:445px;width:9px;height:17px;background:#9ba5b5"></div>
<svg style="position:absolute;left:573.5px;top:582px;" width="7" height="4" viewBox="0 0 7 4"><path d="M0 0 L3.5 3.5 L7 0Z" fill="#6a7486"/></svg>
<div style="left:584px;top:136px;width:12px;height:539px;background:#d6dce9"></div>
<div style="left:595px;top:136px;width:1px;height:539px;background:#b4bccb"></div>
<svg style="position:absolute;left:588px;top:400px;" width="4" height="12" viewBox="0 0 4 12"><path d="M1 1v1M1 4v1M1 7v1M1 10v1M3 2.5v1M3 5.5v1M3 8.5v1" stroke="#a0a8b8" stroke-width="1"/></svg>
<div style="left:-1px;top:605px;width:101px;height:16px;background:#fff;border:1px solid #b9c2d2"></div>
<div class="t" style="left:-5px;top:607.20px;font-size:11px;color:#1e2a3c">bined</div>
<svg style="position:absolute;left:91px;top:612px;" width="6" height="4" viewBox="0 0 6 4"><path d="M0 0H6L3 3Z" fill="#404858"/></svg>
<div style="left:107px;top:605px;width:68px;height:16px;background:#fff;border:1px solid #b9c2d2"></div>
<div class="t" style="left:111px;top:607.20px;font-size:11px;color:#1e2a3c">Auto</div>
<svg style="position:absolute;left:166px;top:612px;" width="6" height="4" viewBox="0 0 6 4"><path d="M0 0H6L3 3Z" fill="#404858"/></svg>
<div style="left:0px;top:593px;width:584px;height:11px;background:#d1d7e4"></div>
<svg style="position:absolute;left:227px;top:595.5px;" width="22" height="4" viewBox="0 0 22 4"><path d="M1 1h1M4 1h1M7 1h1M10 1h1M13 1h1M16 1h1M19 1h1M2.5 3h1M5.5 3h1M8.5 3h1M11.5 3h1M14.5 3h1M17.5 3h1" stroke="#a0a8b8" stroke-width="1"/></svg>
<div style="left:464px;top:604px;width:120px;height:20px;background:#d9dfeb"></div>
<div style="left:466px;top:608px;width:9px;height:9px;background:#fff;border:1px solid #8a93a4"></div>
<div class="t" style="left:479px;top:606.30px;font-size:11px;color:#1e2a3c;letter-spacing:-0.22px">Ignore Today&#39;s Trades</div>
<div style="left:-1px;top:624px;width:586px;height:51px;background:#fff;border:1px solid #c3cad7"></div>
<div style="left:0px;top:625px;width:584px;height:17px;background:#f6f8fb"></div>
<div style="left:0px;top:642px;width:584px;height:1px;background:#dde2eb"></div>
<div style="left:0px;top:658px;width:584px;height:1px;background:#dde2eb"></div>
<div style="left:0px;top:625px;width:1px;height:48px;background:#dde2eb"></div>
<div style="left:53px;top:625px;width:1px;height:48px;background:#dde2eb"></div>
<div class="t" style="left:-3.0px;top:626.70px;width:60px;text-align:center;font-size:11px;color:#354054">Cost</div>
<div class="t" style="left:-19.0px;top:644.20px;width:70px;text-align:right;font-size:11px;color:#1e2a3c">-451.40</div>
<div style="left:106px;top:625px;width:1px;height:48px;background:#dde2eb"></div>
<div class="t" style="left:50.0px;top:626.70px;width:60px;text-align:center;font-size:11px;color:#354054">Curr Cost</div>
<div class="t" style="left:34.0px;top:644.20px;width:70px;text-align:right;font-size:11px;color:#1e2a3c">751.25</div>
<div style="left:159px;top:625px;width:1px;height:48px;background:#dde2eb"></div>
<div class="t" style="left:103.0px;top:626.70px;width:60px;text-align:center;font-size:11px;color:#354054">Commis...</div>
<div class="t" style="left:87.0px;top:644.20px;width:70px;text-align:right;font-size:11px;color:#1e2a3c">28.90</div>
<div style="left:212px;top:625px;width:1px;height:48px;background:#dde2eb"></div>
<div class="t" style="left:156.0px;top:626.70px;width:60px;text-align:center;font-size:11px;color:#354054">PnL</div>
<div class="t" style="left:140.0px;top:644.20px;width:70px;text-align:right;font-size:11px;color:#2e9a2e">299.85</div>
<div style="left:264px;top:625px;width:1px;height:48px;background:#dde2eb"></div>
<div class="t" style="left:208.5px;top:626.70px;width:60px;text-align:center;font-size:11px;color:#354054">PnL%</div>
<div class="t" style="left:192.0px;top:644.20px;width:70px;text-align:right;font-size:11px;color:#2e9a2e">0.88%</div>
<div style="left:317px;top:625px;width:1px;height:48px;background:#dde2eb"></div>
<div class="t" style="left:261.0px;top:626.70px;width:60px;text-align:center;font-size:11px;color:#354054">Delta</div>
<div class="t" style="left:245.0px;top:644.20px;width:70px;text-align:right;font-size:11px;color:#1e2a3c">3.14</div>
<div class="t" style="left:245.0px;top:660.20px;width:70px;text-align:right;font-size:11px;color:#1e2a3c">0.00</div>
<div style="left:370px;top:625px;width:1px;height:48px;background:#dde2eb"></div>
<div class="t" style="left:314.0px;top:626.70px;width:60px;text-align:center;font-size:11px;color:#354054">Gamma</div>
<div class="t" style="left:298.0px;top:644.20px;width:70px;text-align:right;font-size:11px;color:#1e2a3c">-0.05</div>
<div class="t" style="left:298.0px;top:660.20px;width:70px;text-align:right;font-size:11px;color:#1e2a3c">0.00</div>
<div style="left:423px;top:625px;width:1px;height:48px;background:#dde2eb"></div>
<div class="t" style="left:367.0px;top:626.70px;width:60px;text-align:center;font-size:11px;color:#354054">Theta</div>
<div class="t" style="left:351.0px;top:644.20px;width:70px;text-align:right;font-size:11px;color:#1e2a3c">85.97</div>
<div class="t" style="left:351.0px;top:660.20px;width:70px;text-align:right;font-size:11px;color:#1e2a3c">0.00</div>
<div style="left:476px;top:625px;width:1px;height:48px;background:#dde2eb"></div>
<div class="t" style="left:420.0px;top:626.70px;width:60px;text-align:center;font-size:11px;color:#354054">Vega</div>
<div class="t" style="left:404.0px;top:644.20px;width:70px;text-align:right;font-size:11px;color:#1e2a3c">80.17</div>
<div class="t" style="left:404.0px;top:660.20px;width:70px;text-align:right;font-size:11px;color:#1e2a3c">0.00</div>
<div style="left:529px;top:625px;width:1px;height:48px;background:#dde2eb"></div>
<div class="t" style="left:473.0px;top:626.70px;width:60px;text-align:center;font-size:11px;color:#354054">T/D</div>
<div class="t" style="left:457.0px;top:644.20px;width:70px;text-align:right;font-size:11px;color:#1e2a3c">27.4</div>
<div class="t" style="left:457.0px;top:660.20px;width:70px;text-align:right;font-size:11px;color:#1e2a3c">0</div>
<div class="t" style="left:527.0px;top:626.70px;width:60px;text-align:center;font-size:11px;color:#354054">Plot</div>
<svg style="position:absolute;left:552px;top:645.5px;" width="11" height="11" viewBox="0 0 11 11"><rect x=".5" y=".5" width="10" height="10" fill="#fff" stroke="#b8bec8"/><path d="M2.5 5.5 L4.5 7.5 L8.5 3" stroke="#8890a0" stroke-width="1.2" fill="none"/></svg>
<svg style="position:absolute;left:552px;top:661.5px;" width="11" height="11" viewBox="0 0 11 11"><rect x=".5" y=".5" width="10" height="10" fill="#fff" stroke="#b8bec8"/><path d="M2.5 5.5 L4.5 7.5 L8.5 3" stroke="#8890a0" stroke-width="1.2" fill="none"/></svg>
<div style="left:596px;top:160px;width:484px;height:1px;background:#9aa6b8"></div>
<div style="left:596px;top:138px;width:64px;height:23px;background:#d6dce9;border:1px solid #9aa6b8;border-bottom:none"></div>
<div class="t" style="left:548.0px;top:142.69px;width:160px;text-align:center;font-size:11px;color:#1e2a3c">Risk Chart</div>
<div style="left:659px;top:138px;width:68px;height:22px;background:#ccd3e1;border:1px solid #9aa6b8"></div>
<div class="t" style="left:613.75px;top:142.69px;width:160px;text-align:center;font-size:11px;color:#1e2a3c">Price Chart</div>
<div style="left:726px;top:138px;width:107px;height:22px;background:#ccd3e1;border:1px solid #9aa6b8"></div>
<div class="t" style="left:700.4px;top:142.69px;width:160px;text-align:center;font-size:11px;color:#1e2a3c">Movement Analysis</div>
<div style="left:832px;top:138px;width:55px;height:22px;background:#ccd3e1;border:1px solid #9aa6b8"></div>
<div class="t" style="left:780.3px;top:142.69px;width:160px;text-align:center;font-size:11px;color:#1e2a3c">Volatility</div>
<div style="left:886px;top:138px;width:135px;height:22px;background:#ccd3e1;border:1px solid #9aa6b8"></div>
<div class="t" style="left:874.5px;top:142.69px;width:160px;text-align:center;font-size:11px;color:#1e2a3c">Statistics &amp; Fundamentals</div>
<div style="left:596px;top:161px;width:1px;height:21px;background:#9aa6b8"></div>
<div class="t" style="left:601px;top:165.19px;font-size:11px;color:#1e2a3c">Vol Adjust</div>
<div style="left:650px;top:163px;width:45px;height:16px;background:#fff;border:1px solid #c2cad8"></div>
<div class="t" style="left:660px;top:165.19px;width:20px;text-align:right;font-size:11px;color:#1e2a3c">0</div>
<svg style="position:absolute;left:685px;top:166px;" width="7" height="12" viewBox="0 0 7 12"><path d="M0.5 4 L3.5 0.5 L6.5 4Z M0.5 8 L3.5 11.5 L6.5 8Z" fill="#404858"/></svg>
<div class="t" style="left:987px;top:165.19px;font-size:11px;color:#1e2a3c">Projection</div>
<div style="left:1034px;top:164px;width:50px;height:15px;background:#fff;border:1px solid #c2cad8"></div>
<div class="t" style="left:1036px;top:165.19px;font-size:11px;color:#1e2a3c">09/06/2025</div>
<div style="left:596px;top:182px;width:484px;height:471px;background:#fff"></div>
<svg style="position:absolute;left:0px;top:0px;pointer-events:none" width="1080" height="675" viewBox="0 0 1080 675"><line x1="643" y1="197.5" x2="1080" y2="197.5" stroke="#e2e2e2" stroke-width="1"/><line x1="643" y1="220.5" x2="1080" y2="220.5" stroke="#e2e2e2" stroke-width="1"/><line x1="643" y1="243.5" x2="1080" y2="243.5" stroke="#e2e2e2" stroke-width="1"/><line x1="643" y1="266.5" x2="1080" y2="266.5" stroke="#e2e2e2" stroke-width="1"/><line x1="643" y1="289.5" x2="1080" y2="289.5" stroke="#e2e2e2" stroke-width="1"/><line x1="643" y1="312.5" x2="1080" y2="312.5" stroke="#e2e2e2" stroke-width="1"/><line x1="643" y1="335.5" x2="1080" y2="335.5" stroke="#e2e2e2" stroke-width="1"/><line x1="643" y1="358.5" x2="1080" y2="358.5" stroke="#e2e2e2" stroke-width="1"/><line x1="643" y1="381.5" x2="1080" y2="381.5" stroke="#e2e2e2" stroke-width="1"/><line x1="643" y1="404.5" x2="1080" y2="404.5" stroke="#e2e2e2" stroke-width="1"/><line x1="643" y1="427.5" x2="1080" y2="427.5" stroke="#e2e2e2" stroke-width="1"/><line x1="643" y1="450.5" x2="1080" y2="450.5" stroke="#e2e2e2" stroke-width="1"/><line x1="643" y1="473.5" x2="1080" y2="473.5" stroke="#e2e2e2" stroke-width="1"/><line x1="680.5" y1="197" x2="680.5" y2="473.5" stroke="#e2e2e2" stroke-width="1"/><line x1="730.5" y1="197" x2="730.5" y2="473.5" stroke="#e2e2e2" stroke-width="1"/><line x1="780.5" y1="197" x2="780.5" y2="473.5" stroke="#e2e2e2" stroke-width="1"/><line x1="830.5" y1="197" x2="830.5" y2="473.5" stroke="#e2e2e2" stroke-width="1"/><line x1="880.5" y1="197" x2="880.5" y2="473.5" stroke="#e2e2e2" stroke-width="1"/><line x1="931.5" y1="197" x2="931.5" y2="473.5" stroke="#e2e2e2" stroke-width="1"/><line x1="981.5" y1="197" x2="981.5" y2="473.5" stroke="#e2e2e2" stroke-width="1"/><line x1="1032.5" y1="197" x2="1032.5" y2="473.5" stroke="#e2e2e2" stroke-width="1"/><line x1="1082.5" y1="197" x2="1082.5" y2="473.5" stroke="#e2e2e2" stroke-width="1"/><line x1="643.5" y1="197" x2="643.5" y2="478.5" stroke="#e2e2e2" stroke-width="1"/><rect x="804.7" y="197" width="170.0999999999999" height="276.5" fill="#93cad8"/><rect x="846.8" y="197" width="84.5" height="276.5" fill="#4e7fbd"/><rect x="929.8" y="197" width="2" height="276.5" fill="#8aa8d0"/><line x1="804.7" y1="220.5" x2="974.8" y2="220.5" stroke="#ffffff" stroke-opacity=".45" stroke-width="1"/><line x1="804.7" y1="243.5" x2="974.8" y2="243.5" stroke="#ffffff" stroke-opacity=".45" stroke-width="1"/><line x1="804.7" y1="266.5" x2="974.8" y2="266.5" stroke="#ffffff" stroke-opacity=".45" stroke-width="1"/><line x1="804.7" y1="289.5" x2="974.8" y2="289.5" stroke="#ffffff" stroke-opacity=".45" stroke-width="1"/><line x1="804.7" y1="312.5" x2="974.8" y2="312.5" stroke="#ffffff" stroke-opacity=".45" stroke-width="1"/><line x1="804.7" y1="335.5" x2="974.8" y2="335.5" stroke="#ffffff" stroke-opacity=".45" stroke-width="1"/><line x1="804.7" y1="358.5" x2="974.8" y2="358.5" stroke="#ffffff" stroke-opacity=".45" stroke-width="1"/><line x1="804.7" y1="381.5" x2="974.8" y2="381.5" stroke="#ffffff" stroke-opacity=".45" stroke-width="1"/><line x1="804.7" y1="404.5" x2="974.8" y2="404.5" stroke="#ffffff" stroke-opacity=".45" stroke-width="1"/><line x1="804.7" y1="427.5" x2="974.8" y2="427.5" stroke="#ffffff" stroke-opacity=".45" stroke-width="1"/><line x1="804.7" y1="450.5" x2="974.8" y2="450.5" stroke="#ffffff" stroke-opacity=".45" stroke-width="1"/><line x1="830.5" y1="197" x2="830.5" y2="473.5" stroke="#ffffff" stroke-opacity=".45" stroke-width="1"/><line x1="880.5" y1="197" x2="880.5" y2="473.5" stroke="#ffffff" stroke-opacity=".45" stroke-width="1"/><line x1="931.5" y1="197" x2="931.5" y2="473.5" stroke="#ffffff" stroke-opacity=".45" stroke-width="1"/><text transform="translate(812.0,201) rotate(-90)" text-anchor="end" font-family="Liberation Sans" font-size="10" letter-spacing="-0.3" fill="#5b8cc4">5923.76</text><text transform="translate(857.0,201) rotate(-90)" text-anchor="end" font-family="Liberation Sans" font-size="10" letter-spacing="-0.3" fill="#a9c6e6">5966.01</text><text transform="translate(931.0,201) rotate(-90)" text-anchor="end" font-family="Liberation Sans" font-size="10" letter-spacing="-0.3" fill="#a9c6e6">6050.49</text><text transform="translate(974.0,201) rotate(-90)" text-anchor="end" font-family="Liberation Sans" font-size="10" letter-spacing="-0.3" fill="#5b8cc4">6092.74</text><line x1="1043.5" y1="197" x2="1043.5" y2="473.5" stroke="#b03ec0" stroke-width="1" stroke-dasharray="4 3"/><text transform="translate(1041.5,472) rotate(-90)" font-family="Liberation Sans" font-size="10" letter-spacing="-0.3" fill="#a040b0">6161.10</text><line x1="643" y1="289.5" x2="1080" y2="289.5" stroke="#222" stroke-width="1"/><path d="M644 204.3 C667.1 211.7 751.6 239.2 782.6 248.5 C813.6 257.8 817.1 257.1 830 260 C842.9 262.9 843.1 263.2 860 266 C876.9 268.8 910.9 273.7 931.3 276.5 C951.7 279.3 963.5 280.9 982.2 283 C1000.9 285.1 1027.0 287.5 1043.3 289.1 C1059.6 290.7 1073.9 292.2 1080 292.8" stroke="#4040c8" stroke-width="1.7" fill="none"/><path d="M644 360 C650.1 353.3 671.2 330.0 680.7 320 C690.2 310.0 694.2 306.1 701 300 C707.8 293.9 709.6 289.3 721.5 283.7 C733.4 278.1 757.3 270.2 772.4 266.4 C787.5 262.6 801.1 261.8 811.9 260.8 C822.7 259.8 825.6 259.9 837 260.2 C848.4 260.5 864.5 261.3 880 262.4 C895.5 263.5 913.3 265.3 930 267 C946.7 268.7 961.2 270.2 980 272.6 C998.8 275.0 1026.3 279.1 1043 281.3 C1059.7 283.5 1073.8 284.9 1080 285.6" stroke="#f27070" stroke-width="1.1" fill="none"/><path d="M644 456 C650.1 447.6 666.4 422.2 680.7 405.3 C695.0 388.4 715.2 368.1 730 354.7 C744.8 341.3 757.4 333.1 769.7 325 C782.0 316.9 791.0 312.1 804 306.2 C817.0 300.3 836.5 293.4 848 289.7 C859.5 286.0 864.6 285.6 873 283.8 C881.4 282.0 889.0 280.2 898.5 279 C908.0 277.8 917.6 277.1 930 276.3 C942.4 275.5 959.3 274.5 972.6 274.4 C985.9 274.2 991.7 274.5 1009.6 275.4 C1027.5 276.3 1068.3 279.2 1080 280" stroke="#8cb4f2" stroke-width="1.1" fill="none"/><path d="M644 452 L649 445" stroke="#f05050" stroke-width="1.2"/><path d="M873 281.5 L899 278 M873 285.3 L899 281.8" stroke="#c8a080" stroke-width="2.2" stroke-opacity=".9"/><circle cx="895" cy="276" r="3.2" fill="#40d0c0" stroke="#204040" stroke-width="1"/></svg>
<div class="t" style="left:598px;top:191.80px;width:40px;text-align:right;font-size:10px;font-size:10px;letter-spacing:-0.6px;color:#333">6%</div>
<div class="t" style="left:598px;top:214.80px;width:40px;text-align:right;font-size:10px;font-size:10px;letter-spacing:-0.6px;color:#333">4%</div>
<div class="t" style="left:598px;top:237.80px;width:40px;text-align:right;font-size:10px;font-size:10px;letter-spacing:-0.6px;color:#333">3%</div>
<div class="t" style="left:598px;top:260.80px;width:40px;text-align:right;font-size:10px;font-size:10px;letter-spacing:-0.6px;color:#333">1%</div>
<div class="t" style="left:598px;top:283.80px;width:40px;text-align:right;font-size:10px;font-size:10px;letter-spacing:-0.6px;color:#333">0%</div>
<div class="t" style="left:598px;top:306.80px;width:40px;text-align:right;font-size:10px;font-size:10px;letter-spacing:-0.6px;color:#333">-1%</div>
<div class="t" style="left:598px;top:329.80px;width:40px;text-align:right;font-size:10px;font-size:10px;letter-spacing:-0.6px;color:#333">-3%</div>
<div class="t" style="left:598px;top:352.80px;width:40px;text-align:right;font-size:10px;font-size:10px;letter-spacing:-0.6px;color:#333">-4%</div>
<div class="t" style="left:598px;top:375.80px;width:40px;text-align:right;font-size:10px;font-size:10px;letter-spacing:-0.6px;color:#333">-6%</div>
<div class="t" style="left:598px;top:398.80px;width:40px;text-align:right;font-size:10px;font-size:10px;letter-spacing:-0.6px;color:#333">-7%</div>
<div class="t" style="left:598px;top:421.80px;width:40px;text-align:right;font-size:10px;font-size:10px;letter-spacing:-0.6px;color:#333">-9%</div>
<div class="t" style="left:598px;top:444.80px;width:40px;text-align:right;font-size:10px;font-size:10px;letter-spacing:-0.6px;color:#333">-10%</div>
<div class="t" style="left:598px;top:467.80px;width:40px;text-align:right;font-size:10px;font-size:10px;letter-spacing:-0.6px;color:#333">-12%</div>
<div class="t" style="left:660.5px;top:183.80px;width:40px;text-align:center;font-size:10px;font-size:10px;letter-spacing:-0.6px;color:#333">-3.5%</div>
<div class="t" style="left:710.5px;top:183.80px;width:40px;text-align:center;font-size:10px;font-size:10px;letter-spacing:-0.6px;color:#333">-2.6%</div>
<div class="t" style="left:760.5px;top:183.80px;width:40px;text-align:center;font-size:10px;font-size:10px;letter-spacing:-0.6px;color:#333">-1.8%</div>
<div class="t" style="left:810.5px;top:183.80px;width:40px;text-align:center;font-size:10px;font-size:10px;letter-spacing:-0.6px;color:#333">-1.0%</div>
<div class="t" style="left:860.5px;top:183.80px;width:40px;text-align:center;font-size:10px;font-size:10px;letter-spacing:-0.6px;color:#333">-0.1%</div>
<div class="t" style="left:911.5px;top:183.80px;width:40px;text-align:center;font-size:10px;font-size:10px;letter-spacing:-0.6px;color:#333">0.7%</div>
<div class="t" style="left:961.5px;top:183.80px;width:40px;text-align:center;font-size:10px;font-size:10px;letter-spacing:-0.6px;color:#333">1.5%</div>
<div class="t" style="left:1012.5px;top:183.80px;width:40px;text-align:center;font-size:10px;font-size:10px;letter-spacing:-0.6px;color:#333">2.4%</div>
<div class="t" style="left:1062.5px;top:183.80px;width:40px;text-align:center;font-size:10px;font-size:10px;letter-spacing:-0.6px;color:#333">3.2%</div>
<div style="left:882px;top:182px;width:25px;height:11px;background:#fff;border:1px solid #555"></div>
<div class="t" style="left:875.2px;top:182.80px;width:40px;text-align:center;font-size:10px;font-size:10px;letter-spacing:-0.6px;color:#333">0.1%</div>
<div class="t" style="left:660.5px;top:476.60px;width:40px;text-align:center;font-size:10px;font-size:10px;letter-spacing:-0.6px;color:#333">5800</div>
<div class="t" style="left:710.5px;top:476.60px;width:40px;text-align:center;font-size:10px;font-size:10px;letter-spacing:-0.6px;color:#333">5850</div>
<div class="t" style="left:760.5px;top:476.60px;width:40px;text-align:center;font-size:10px;font-size:10px;letter-spacing:-0.6px;color:#333">5900</div>
<div class="t" style="left:810.5px;top:476.60px;width:40px;text-align:center;font-size:10px;font-size:10px;letter-spacing:-0.6px;color:#333">5950</div>
<div class="t" style="left:860.5px;top:476.60px;width:40px;text-align:center;font-size:10px;font-size:10px;letter-spacing:-0.6px;color:#333">6000</div>
<div class="t" style="left:911.5px;top:476.60px;width:40px;text-align:center;font-size:10px;font-size:10px;letter-spacing:-0.6px;color:#333">6050</div>
<div class="t" style="left:961.5px;top:476.60px;width:40px;text-align:center;font-size:10px;font-size:10px;letter-spacing:-0.6px;color:#333">6100</div>
<div class="t" style="left:1012.5px;top:476.60px;width:40px;text-align:center;font-size:10px;font-size:10px;letter-spacing:-0.6px;color:#333">6150</div>
<div class="t" style="left:1062.5px;top:476.60px;width:40px;text-align:center;font-size:10px;font-size:10px;letter-spacing:-0.6px;color:#333">6200</div>
<div style="left:601px;top:269px;width:39px;height:11px;background:#0b8a12"></div>
<div class="t" style="left:608.5px;top:268.80px;width:30px;text-align:right;font-size:10px;color:#fff;font-size:10px;letter-spacing:-0.55px;font-weight:bold">1%</div>
<div class="t" style="left:830.8px;top:455.90px;font-size:10px;color:#7040b8;font-size:10px;letter-spacing:-0.5px">82.3%</div>
<div style="left:647px;top:202px;width:135px;height:93px;background:rgba(236,239,246,.82);border:1px solid #a8b0c0;border-radius:5px"></div>
<div style="left:655px;top:209px;width:3px;height:9px;background:#90c880"></div>
<div class="t" style="left:657.3px;top:208.96px;font-size:9.6px;font-size:9.6px;letter-spacing:-0.25px"><span style="color:#555">2,887.35 Realized PnL</span></div>
<div style="left:655px;top:220px;width:3px;height:10px;background:#7aa4e4"></div>
<div class="t" style="left:657.3px;top:220.54px;font-size:9.6px;font-size:9.6px;letter-spacing:-0.25px"><span style="color:#444">+1 </span><span style="color:#5a5ae6">31jul.&nbsp;5125 Put &#916;</span></div>
<div class="t" style="left:733.4px;top:220.54px;width:40px;text-align:right;font-size:9.6px;color:#5a5ae6;font-size:9.6px;letter-spacing:-0.25px">-4.70</div>
<div style="left:655px;top:232px;width:3px;height:9px;background:#7aa4e4"></div>
<div class="t" style="left:657.3px;top:232.12px;font-size:9.6px;font-size:9.6px;letter-spacing:-0.25px"><span style="color:#444">+2 </span><span style="color:#5a5ae6">20jun.&nbsp;5175 Put &#916;</span></div>
<div class="t" style="left:736px;top:232.12px;width:40px;text-align:right;font-size:9.6px;color:#5a5ae6;font-size:9.6px;letter-spacing:-0.25px">-0.75</div>
<div style="left:655px;top:243px;width:3px;height:10px;background:#7aa4e4"></div>
<div class="t" style="left:657.3px;top:243.70px;font-size:9.6px;font-size:9.6px;letter-spacing:-0.25px"><span style="color:#444">+2 </span><span style="color:#5a5ae6">20jun.&nbsp;5350 Put &#916;</span></div>
<div class="t" style="left:736px;top:243.70px;width:40px;text-align:right;font-size:9.6px;color:#5a5ae6;font-size:9.6px;letter-spacing:-0.25px">-1.30</div>
<div style="left:655px;top:255px;width:3px;height:10px;background:#7aa4e4"></div>
<div class="t" style="left:657.3px;top:255.28px;font-size:9.6px;font-size:9.6px;letter-spacing:-0.25px"><span style="color:#444">-4 </span><span style="color:#f05a5a">20jun.&nbsp;5300 Put &#916;</span></div>
<div class="t" style="left:733.4px;top:255.28px;width:40px;text-align:right;font-size:9.6px;color:#f05a5a;font-size:9.6px;letter-spacing:-0.25px">-1.10</div>
<div style="left:655px;top:267px;width:3px;height:9px;background:#7aa4e4"></div>
<div class="t" style="left:657.3px;top:266.86px;font-size:9.6px;font-size:9.6px;letter-spacing:-0.25px"><span style="color:#444">+1 </span><span style="color:#5a5ae6">31jul.&nbsp;5075 Put &#916;</span></div>
<div class="t" style="left:733.4px;top:266.86px;width:40px;text-align:right;font-size:9.6px;color:#5a5ae6;font-size:9.6px;letter-spacing:-0.25px">-4.22</div>
<div style="left:655px;top:278px;width:3px;height:10px;background:#7aa4e4"></div>
<div class="t" style="left:657.3px;top:278.44px;font-size:9.6px;font-size:9.6px;letter-spacing:-0.25px"><span style="color:#444">-2 </span><span style="color:#f05a5a">20jun.&nbsp;5675 Put &#916;</span></div>
<div class="t" style="left:733.4px;top:278.44px;width:40px;text-align:right;font-size:9.6px;color:#f05a5a;font-size:9.6px;letter-spacing:-0.25px">-5.00</div>
<div style="left:647px;top:422px;width:93px;height:47px;background:rgba(236,239,246,.85);border:1px solid #a8b0c0;border-radius:5px"></div>
<div class="t" style="left:654.8px;top:428.76px;font-size:9.6px;color:#7474dc;font-size:9.6px;letter-spacing:-0.37px">20/06/2025 (0)</div>
<div class="t" style="left:654.8px;top:440.21px;font-size:9.6px;color:#f07070;font-size:9.6px;letter-spacing:-0.37px">15/06/2025 (5) T+6</div>
<div class="t" style="left:654.8px;top:451.66px;font-size:9.6px;color:#8cb6f0;font-size:9.6px;letter-spacing:-0.37px">09/06/2025 (11) T+0</div>
<div style="left:599px;top:491px;width:490px;height:158px;background:#e8eef7;border:1px solid #8a94a4;border-radius:5px"></div>
<svg style="position:absolute;left:0px;top:0px;pointer-events:none" width="1080" height="675" viewBox="0 0 1080 675"><line x1="644" y1="514.5" x2="1080" y2="514.5" stroke="#555" stroke-width="1"/><rect x="644.3" y="514.5" width="61.200000000000045" height="9.032399999999999" fill="#f27474" stroke="#555" stroke-width="1"/><rect x="705.5" y="514.5" width="50.25999999999999" height="5.0472" fill="#f27474" stroke="#555" stroke-width="1"/><rect x="755.76" y="514.5" width="50.25999999999999" height="2.2716" fill="#f27474" stroke="#555" stroke-width="1"/><rect x="906.54" y="513.492" width="50.25999999999999" height="1.008" fill="#5a7cf4" stroke="#555" stroke-width="1"/><rect x="956.8" y="513.3876" width="50.25999999999999" height="1.1124" fill="#5a7cf4" stroke="#555" stroke-width="1"/><rect x="1007.06" y="513.51" width="50.25999999999999" height="0.99" fill="#5a7cf4" stroke="#555" stroke-width="1"/><rect x="1057.32" y="513.6" width="42.680000000000064" height="0.9" fill="#5a7cf4" stroke="#555" stroke-width="1"/><line x1="644" y1="551.2" x2="1080" y2="551.2" stroke="#555" stroke-width="1"/><rect x="644.3" y="542.9248" width="61.200000000000045" height="8.2752" fill="#5a7cf4" stroke="#555" stroke-width="1"/><rect x="705.5" y="545.2512" width="50.25999999999999" height="5.9488" fill="#5a7cf4" stroke="#555" stroke-width="1"/><rect x="755.76" y="547.216" width="50.25999999999999" height="3.984" fill="#5a7cf4" stroke="#555" stroke-width="1"/><rect x="806.02" y="548.7744" width="50.25999999999999" height="2.4256" fill="#5a7cf4" stroke="#555" stroke-width="1"/><rect x="856.28" y="549.9328" width="50.25999999999999" height="1.2672" fill="#5a7cf4" stroke="#555" stroke-width="1"/><line x1="644" y1="579.2" x2="1080" y2="579.2" stroke="#555" stroke-width="1"/><rect x="644.3" y="579.2" width="61.200000000000045" height="8.4" fill="#f27474" stroke="#555" stroke-width="1"/><rect x="705.5" y="579.2" width="50.25999999999999" height="7.28" fill="#f27474" stroke="#555" stroke-width="1"/><rect x="755.76" y="579.2" width="50.25999999999999" height="6.16" fill="#f27474" stroke="#555" stroke-width="1"/><rect x="806.02" y="579.2" width="50.25999999999999" height="4.48" fill="#f27474" stroke="#555" stroke-width="1"/><rect x="856.28" y="579.2" width="50.25999999999999" height="3.9200000000000004" fill="#f27474" stroke="#555" stroke-width="1"/><rect x="906.54" y="579.2" width="50.25999999999999" height="2.24" fill="#f27474" stroke="#555" stroke-width="1"/><rect x="956.8" y="579.2" width="50.25999999999999" height="1.12" fill="#f27474" stroke="#555" stroke-width="1"/><line x1="644" y1="606.1" x2="1080" y2="606.1" stroke="#555" stroke-width="1"/><rect x="644.3" y="597.708918" width="61.200000000000045" height="8.391081999999999" fill="#5a7cf4" stroke="#555" stroke-width="1"/><rect x="705.5" y="598.637104" width="50.25999999999999" height="7.462896" fill="#5a7cf4" stroke="#555" stroke-width="1"/><rect x="755.76" y="599.946718" width="50.25999999999999" height="6.153282" fill="#5a7cf4" stroke="#555" stroke-width="1"/><rect x="806.02" y="601.416318" width="50.25999999999999" height="4.683681999999999" fill="#5a7cf4" stroke="#555" stroke-width="1"/><rect x="856.28" y="602.849178" width="50.25999999999999" height="3.250822" fill="#5a7cf4" stroke="#555" stroke-width="1"/><rect x="906.54" y="604.101678" width="50.25999999999999" height="1.998322" fill="#5a7cf4" stroke="#555" stroke-width="1"/><rect x="956.8" y="605.100672" width="50.25999999999999" height="0.999328" fill="#5a7cf4" stroke="#555" stroke-width="1"/><line x1="644" y1="633.9" x2="1080" y2="633.9" stroke="#555" stroke-width="1"/><rect x="644.3" y="633.9" width="61.200000000000045" height="0.67452" fill="#f27474" stroke="#555" stroke-width="1"/><rect x="755.76" y="632.27761" width="50.25999999999999" height="1.62239" fill="#5a7cf4" stroke="#555" stroke-width="1"/><rect x="806.02" y="630.2355699999999" width="50.25999999999999" height="3.6644300000000003" fill="#5a7cf4" stroke="#555" stroke-width="1"/><rect x="856.28" y="628.25359" width="50.25999999999999" height="5.6464099999999995" fill="#5a7cf4" stroke="#555" stroke-width="1"/><rect x="906.54" y="626.61272" width="50.25999999999999" height="7.28728" fill="#5a7cf4" stroke="#555" stroke-width="1"/><rect x="956.8" y="625.52779" width="50.25999999999999" height="8.37221" fill="#5a7cf4" stroke="#555" stroke-width="1"/><rect x="1007.06" y="625.01189" width="50.25999999999999" height="8.888110000000001" fill="#5a7cf4" stroke="#555" stroke-width="1"/><rect x="1057.32" y="625.199" width="42.680000000000064" height="8.701" fill="#5a7cf4" stroke="#555" stroke-width="1"/></svg>
<div class="t" style="left:596.0px;top:508.65px;width:50px;text-align:center;font-size:10.5px;color:#707070;font-size:10.5px;letter-spacing:-0.5px">PnL</div>
<div class="t" style="left:596.0px;top:545.35px;width:50px;text-align:center;font-size:10.5px;color:#707070;font-size:10.5px;letter-spacing:-0.5px">Delta</div>
<div class="t" style="left:596.0px;top:573.35px;width:50px;text-align:center;font-size:10.5px;color:#707070;font-size:10.5px;letter-spacing:-0.5px">Gamma</div>
<div class="t" style="left:596.0px;top:600.25px;width:50px;text-align:center;font-size:10.5px;color:#707070;font-size:10.5px;letter-spacing:-0.5px">Theta</div>
<div class="t" style="left:596.0px;top:628.05px;width:50px;text-align:center;font-size:10.5px;color:#707070;font-size:10.5px;letter-spacing:-0.5px">Vega</div>
<div class="t" style="left:655.5px;top:494.90px;width:50px;text-align:center;font-size:10px;color:#f27474;font-size:10px;letter-spacing:-0.7px;">-7%</div>
<div class="t" style="left:655.5px;top:505.00px;width:50px;text-align:center;font-size:10px;color:#f27474;font-size:10px;letter-spacing:-0.7px;">-2509</div>
<div class="t" style="left:705.5px;top:494.90px;width:50px;text-align:center;font-size:10px;color:#f27474;font-size:10px;letter-spacing:-0.7px;">-4%</div>
<div class="t" style="left:705.5px;top:505.00px;width:50px;text-align:center;font-size:10px;color:#f27474;font-size:10px;letter-spacing:-0.7px;">-1402</div>
<div class="t" style="left:755.5px;top:494.90px;width:50px;text-align:center;font-size:10px;color:#f27474;font-size:10px;letter-spacing:-0.7px;">-2%</div>
<div class="t" style="left:755.5px;top:505.00px;width:50px;text-align:center;font-size:10px;color:#f27474;font-size:10px;letter-spacing:-0.7px;">-631</div>
<div class="t" style="left:805.5px;top:494.90px;width:50px;text-align:center;font-size:10px;color:#f27474;font-size:10px;letter-spacing:-0.7px;">0%</div>
<div class="t" style="left:805.5px;top:505.00px;width:50px;text-align:center;font-size:10px;color:#f27474;font-size:10px;letter-spacing:-0.7px;">-135</div>
<div class="t" style="left:855.5px;top:514.60px;width:50px;text-align:center;font-size:10px;color:#6a7cf0;font-size:10px;letter-spacing:-0.7px;">143</div>
<div class="t" style="left:855.5px;top:522.20px;width:50px;text-align:center;font-size:10px;color:#6a7cf0;font-size:10px;letter-spacing:-0.7px;">0%</div>
<div class="t" style="left:906.5px;top:514.60px;width:50px;text-align:center;font-size:10px;color:#6a7cf0;font-size:10px;letter-spacing:-0.7px;">280</div>
<div class="t" style="left:906.5px;top:522.20px;width:50px;text-align:center;font-size:10px;color:#6a7cf0;font-size:10px;letter-spacing:-0.7px;">1%</div>
<div class="t" style="left:956.5px;top:514.60px;width:50px;text-align:center;font-size:10px;color:#6a7cf0;font-size:10px;letter-spacing:-0.7px;">309</div>
<div class="t" style="left:956.5px;top:522.20px;width:50px;text-align:center;font-size:10px;color:#6a7cf0;font-size:10px;letter-spacing:-0.7px;">1%</div>
<div class="t" style="left:1007.5px;top:514.60px;width:50px;text-align:center;font-size:10px;color:#6a7cf0;font-size:10px;letter-spacing:-0.7px;">275</div>
<div class="t" style="left:1007.5px;top:522.20px;width:50px;text-align:center;font-size:10px;color:#6a7cf0;font-size:10px;letter-spacing:-0.7px;">1%</div>
<div class="t" style="left:1057.5px;top:514.60px;width:50px;text-align:center;font-size:10px;color:#6a7cf0;font-size:10px;letter-spacing:-0.7px;">250</div>
<div class="t" style="left:1057.5px;top:522.20px;width:50px;text-align:center;font-size:10px;color:#6a7cf0;font-size:10px;letter-spacing:-0.7px;">1%</div>
<div class="t" style="left:655.5px;top:550.80px;width:50px;text-align:center;font-size:10px;color:#6a7cf0;font-size:10px;letter-spacing:-0.7px;">25.86</div>
<div class="t" style="left:705.5px;top:550.80px;width:50px;text-align:center;font-size:10px;color:#6a7cf0;font-size:10px;letter-spacing:-0.7px;">18.59</div>
<div class="t" style="left:755.5px;top:550.80px;width:50px;text-align:center;font-size:10px;color:#6a7cf0;font-size:10px;letter-spacing:-0.7px;">12.45</div>
<div class="t" style="left:805.5px;top:550.80px;width:50px;text-align:center;font-size:10px;color:#6a7cf0;font-size:10px;letter-spacing:-0.7px;">7.58</div>
<div class="t" style="left:855.5px;top:550.80px;width:50px;text-align:center;font-size:10px;color:#6a7cf0;font-size:10px;letter-spacing:-0.7px;">3.96</div>
<div class="t" style="left:906.5px;top:550.80px;width:50px;text-align:center;font-size:10px;color:#6a7cf0;font-size:10px;letter-spacing:-0.7px;">1.45</div>
<div class="t" style="left:956.5px;top:541.30px;width:50px;text-align:center;font-size:10px;color:#f27474;font-size:10px;letter-spacing:-0.7px;">-0.16</div>
<div class="t" style="left:1007.5px;top:541.30px;width:50px;text-align:center;font-size:10px;color:#f27474;font-size:10px;letter-spacing:-0.7px;">-1.08</div>
<div class="t" style="left:1057.5px;top:541.30px;width:50px;text-align:center;font-size:10px;color:#f27474;font-size:10px;letter-spacing:-0.7px;">-1.50</div>
<div class="t" style="left:655.5px;top:569.30px;width:50px;text-align:center;font-size:10px;color:#f27474;font-size:10px;letter-spacing:-0.7px;">-0.15</div>
<div class="t" style="left:705.5px;top:569.30px;width:50px;text-align:center;font-size:10px;color:#f27474;font-size:10px;letter-spacing:-0.7px;">-0.13</div>
<div class="t" style="left:755.5px;top:569.30px;width:50px;text-align:center;font-size:10px;color:#f27474;font-size:10px;letter-spacing:-0.7px;">-0.11</div>
<div class="t" style="left:805.5px;top:569.30px;width:50px;text-align:center;font-size:10px;color:#f27474;font-size:10px;letter-spacing:-0.7px;">-0.08</div>
<div class="t" style="left:855.5px;top:569.30px;width:50px;text-align:center;font-size:10px;color:#f27474;font-size:10px;letter-spacing:-0.7px;">-0.07</div>
<div class="t" style="left:906.5px;top:569.30px;width:50px;text-align:center;font-size:10px;color:#f27474;font-size:10px;letter-spacing:-0.7px;">-0.04</div>
<div class="t" style="left:956.5px;top:569.30px;width:50px;text-align:center;font-size:10px;color:#f27474;font-size:10px;letter-spacing:-0.7px;">-0.02</div>
<div class="t" style="left:1007.5px;top:569.30px;width:50px;text-align:center;font-size:10px;color:#f27474;font-size:10px;letter-spacing:-0.7px;">-0.01</div>
<div class="t" style="left:1057.5px;top:569.30px;width:50px;text-align:center;font-size:10px;color:#f27474;font-size:10px;letter-spacing:-0.7px;">-0.01</div>
<div class="t" style="left:655.5px;top:605.70px;width:50px;text-align:center;font-size:10px;color:#6a7cf0;font-size:10px;letter-spacing:-0.7px;">251.23</div>
<div class="t" style="left:705.5px;top:605.70px;width:50px;text-align:center;font-size:10px;color:#6a7cf0;font-size:10px;letter-spacing:-0.7px;">223.44</div>
<div class="t" style="left:755.5px;top:605.70px;width:50px;text-align:center;font-size:10px;color:#6a7cf0;font-size:10px;letter-spacing:-0.7px;">184.23</div>
<div class="t" style="left:805.5px;top:605.70px;width:50px;text-align:center;font-size:10px;color:#6a7cf0;font-size:10px;letter-spacing:-0.7px;">140.23</div>
<div class="t" style="left:855.5px;top:605.70px;width:50px;text-align:center;font-size:10px;color:#6a7cf0;font-size:10px;letter-spacing:-0.7px;">97.33</div>
<div class="t" style="left:906.5px;top:605.70px;width:50px;text-align:center;font-size:10px;color:#6a7cf0;font-size:10px;letter-spacing:-0.7px;">59.83</div>
<div class="t" style="left:956.5px;top:605.70px;width:50px;text-align:center;font-size:10px;color:#6a7cf0;font-size:10px;letter-spacing:-0.7px;">29.92</div>
<div class="t" style="left:1007.5px;top:605.70px;width:50px;text-align:center;font-size:10px;color:#6a7cf0;font-size:10px;letter-spacing:-0.7px;">8.13</div>
<div class="t" style="left:1057.5px;top:596.20px;width:50px;text-align:center;font-size:10px;color:#f27474;font-size:10px;letter-spacing:-0.7px;">-6.20</div>
<div class="t" style="left:655.5px;top:624.00px;width:50px;text-align:center;font-size:10px;color:#f27474;font-size:10px;letter-spacing:-0.7px;">-8.76</div>
<div class="t" style="left:705.5px;top:633.50px;width:50px;text-align:center;font-size:10px;color:#6a7cf0;font-size:10px;letter-spacing:-0.7px;">0.01</div>
<div class="t" style="left:755.5px;top:633.50px;width:50px;text-align:center;font-size:10px;color:#6a7cf0;font-size:10px;letter-spacing:-0.7px;">21.07</div>
<div class="t" style="left:805.5px;top:633.50px;width:50px;text-align:center;font-size:10px;color:#6a7cf0;font-size:10px;letter-spacing:-0.7px;">47.59</div>
<div class="t" style="left:855.5px;top:633.50px;width:50px;text-align:center;font-size:10px;color:#6a7cf0;font-size:10px;letter-spacing:-0.7px;">73.33</div>
<div class="t" style="left:906.5px;top:633.50px;width:50px;text-align:center;font-size:10px;color:#6a7cf0;font-size:10px;letter-spacing:-0.7px;">94.64</div>
<div class="t" style="left:956.5px;top:633.50px;width:50px;text-align:center;font-size:10px;color:#6a7cf0;font-size:10px;letter-spacing:-0.7px;">108.73</div>
<div class="t" style="left:1007.5px;top:633.50px;width:50px;text-align:center;font-size:10px;color:#6a7cf0;font-size:10px;letter-spacing:-0.7px;">115.43</div>
<div class="t" style="left:1057.5px;top:633.50px;width:50px;text-align:center;font-size:10px;color:#6a7cf0;font-size:10px;letter-spacing:-0.7px;">113.00</div>
<div style="left:874px;top:477px;width:42px;height:171px;background:rgba(232,238,247,.9);border:1px solid #7a8494;border-radius:4px"></div>
<div class="t" style="left:870.0px;top:477.15px;width:50px;text-align:center;font-size:10.5px;color:#222;font-size:10.5px;letter-spacing:-0.5px">6014.25</div>
<div class="t" style="left:870.0px;top:504.09px;width:50px;text-align:center;font-size:11px;color:#3a4ee0;font-size:11px;letter-spacing:-0.5px">300</div>
<div class="t" style="left:870.0px;top:517.20px;width:50px;text-align:center;font-size:11px;color:#3a4ee0;font-size:11px;letter-spacing:-0.5px">0.9%</div>
<div class="t" style="left:870.0px;top:544.10px;width:50px;text-align:center;font-size:11px;color:#3a4ee0;font-size:11px;letter-spacing:-0.5px">3.14</div>
<div class="t" style="left:870.0px;top:572.00px;width:50px;text-align:center;font-size:11px;color:#f03030;font-size:11px;letter-spacing:-0.5px">-0.05</div>
<div class="t" style="left:870.0px;top:599.40px;width:50px;text-align:center;font-size:11px;color:#3a4ee0;font-size:11px;letter-spacing:-0.5px">85.97</div>
<div class="t" style="left:870.0px;top:627.40px;width:50px;text-align:center;font-size:11px;color:#3a4ee0;font-size:11px;letter-spacing:-0.5px">80.17</div>
<div style="left:596px;top:653px;width:484px;height:21px;background:#283650"></div>
<div style="left:596px;top:674px;width:484px;height:1px;background:#6a7080"></div>
<div class="t" style="left:1008px;top:657.24px;width:60px;text-align:right;font-size:11.5px;color:#e8ecf2;font-size:11.5px">360%</div>
<div style="left:1073px;top:663px;width:7px;height:1px;background:#c8ccd4"></div></body></html>
